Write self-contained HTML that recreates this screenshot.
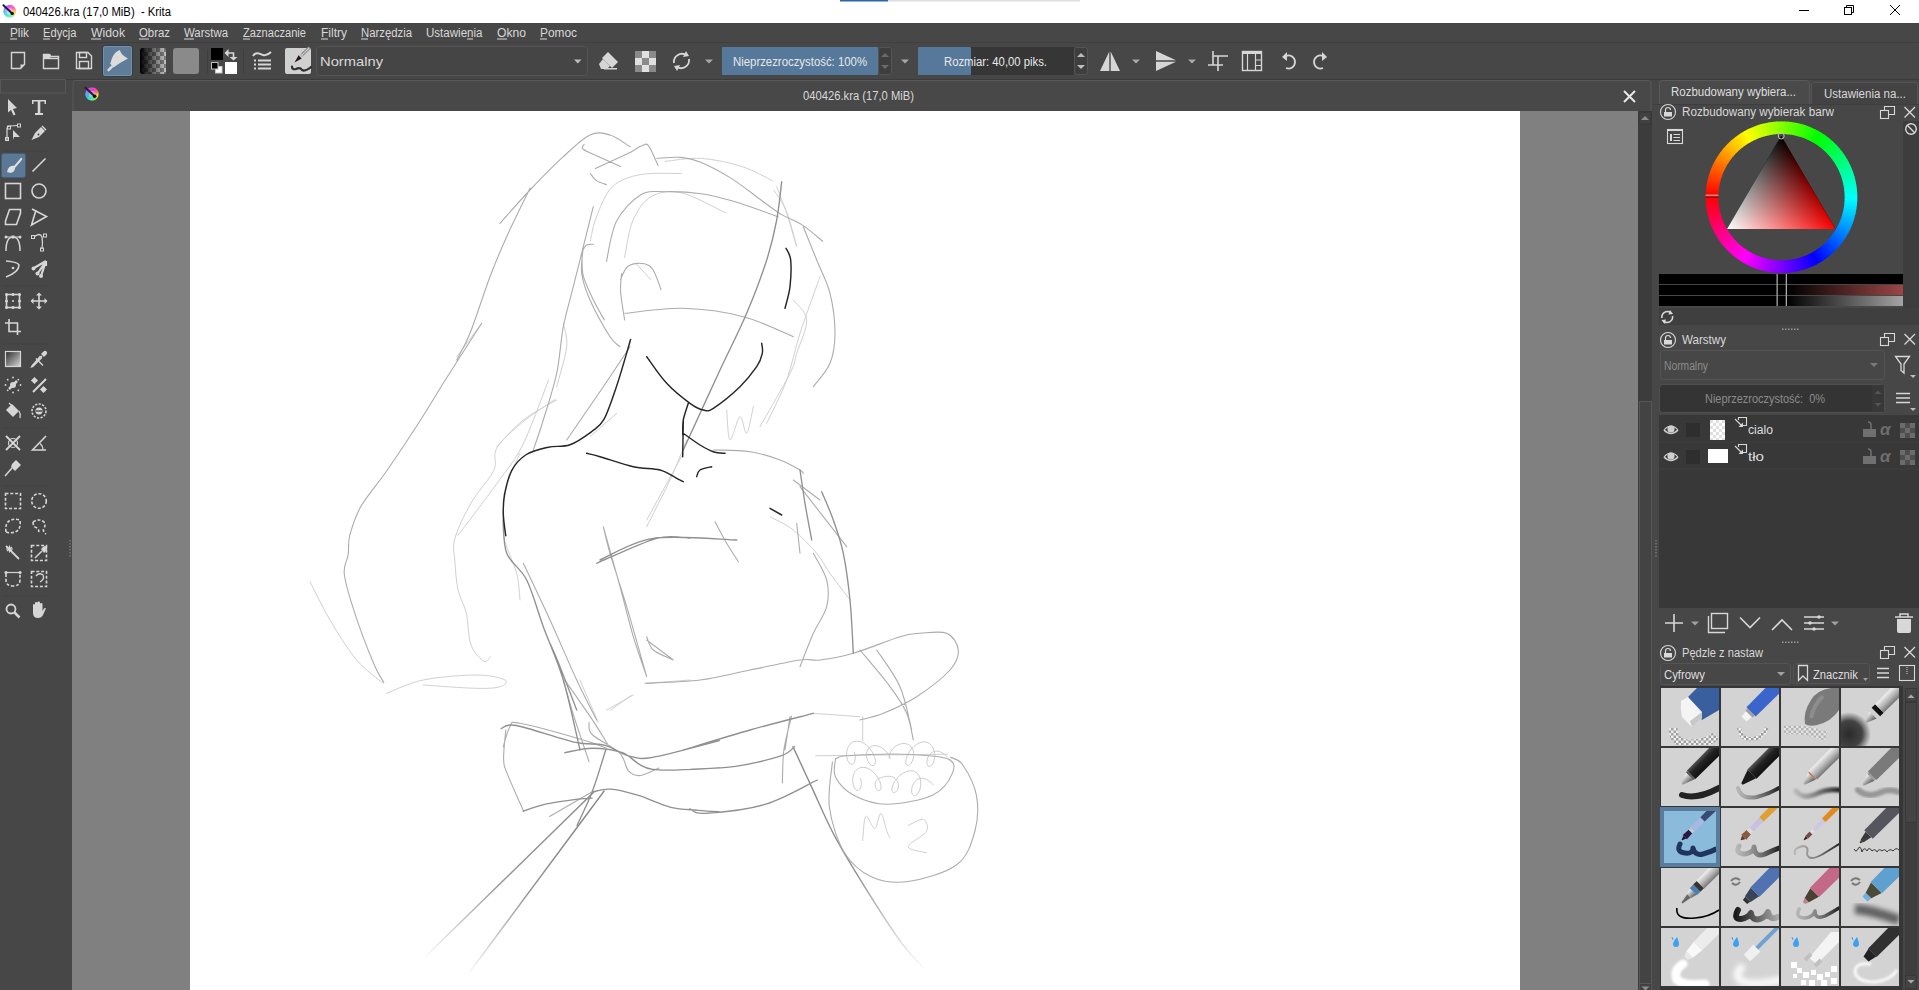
<!DOCTYPE html>
<html><head><meta charset="utf-8">
<style>
*{margin:0;padding:0}
html,body{width:1919px;height:990px;overflow:hidden;background:#474747}
svg{position:absolute;left:0;top:0;display:block}
text{font-family:"Liberation Sans",sans-serif;white-space:pre}
</style></head><body>
<svg width="1919" height="990" viewBox="0 0 1919 990">
<rect x="0" y="0" width="1919" height="23" fill="#ffffff" />
<rect x="840" y="0" width="48" height="1.5" fill="#2a66a8" />
<rect x="888" y="0" width="192" height="1.5" fill="#dedede" />
<defs><linearGradient id="klg" x1="0" y1="1" x2="1" y2="0"><stop offset="0" stop-color="#30e0e0"/><stop offset=".5" stop-color="#8aa0ff"/><stop offset="1" stop-color="#ff40e0"/></linearGradient></defs>
<g><path d="M9.7 11.2 L9.70 4.90 A6.3 6.3 0 0 1 11.01 5.04 Z" fill="#ff30f0"/><path d="M9.7 11.2 L10.79 5.00 A6.3 6.3 0 0 1 12.06 5.36 Z" fill="#ff39e0"/><path d="M9.7 11.2 L11.85 5.28 A6.3 6.3 0 0 1 13.04 5.86 Z" fill="#ff42d0"/><path d="M9.7 11.2 L12.85 5.74 A6.3 6.3 0 0 1 13.92 6.52 Z" fill="#ff4cc1"/><path d="M9.7 11.2 L13.75 6.37 A6.3 6.3 0 0 1 14.66 7.32 Z" fill="#ff55b1"/><path d="M9.7 11.2 L14.53 7.15 A6.3 6.3 0 0 1 15.26 8.24 Z" fill="#ff5ea2"/><path d="M9.7 11.2 L15.16 8.05 A6.3 6.3 0 0 1 15.69 9.25 Z" fill="#ff7590"/><path d="M9.7 11.2 L15.62 9.05 A6.3 6.3 0 0 1 15.94 10.32 Z" fill="#ff8e7d"/><path d="M9.7 11.2 L15.90 10.11 A6.3 6.3 0 0 1 16.00 11.42 Z" fill="#ffa76a"/><path d="M9.7 11.2 L16.00 11.20 A6.3 6.3 0 0 1 15.86 12.51 Z" fill="#ffc058"/><path d="M9.7 11.2 L15.90 12.29 A6.3 6.3 0 0 1 15.54 13.56 Z" fill="#ffd845"/><path d="M9.7 11.2 L15.62 13.35 A6.3 6.3 0 0 1 15.04 14.54 Z" fill="#ede248"/><path d="M9.7 11.2 L15.16 14.35 A6.3 6.3 0 0 1 14.38 15.42 Z" fill="#d4e555"/><path d="M9.7 11.2 L14.53 15.25 A6.3 6.3 0 0 1 13.58 16.16 Z" fill="#bbe861"/><path d="M9.7 11.2 L13.75 16.03 A6.3 6.3 0 0 1 12.66 16.76 Z" fill="#a3eb6e"/><path d="M9.7 11.2 L12.85 16.66 A6.3 6.3 0 0 1 11.65 17.19 Z" fill="#8aee7a"/><path d="M9.7 11.2 L11.85 17.12 A6.3 6.3 0 0 1 10.58 17.44 Z" fill="#77f08a"/><path d="M9.7 11.2 L10.79 17.40 A6.3 6.3 0 0 1 9.48 17.50 Z" fill="#67f09d"/><path d="M9.7 11.2 L9.70 17.50 A6.3 6.3 0 0 1 8.39 17.36 Z" fill="#58f0b0"/><path d="M9.7 11.2 L8.61 17.40 A6.3 6.3 0 0 1 7.34 17.04 Z" fill="#48f0c2"/><path d="M9.7 11.2 L7.55 17.12 A6.3 6.3 0 0 1 6.36 16.54 Z" fill="#38f0d5"/><path d="M9.7 11.2 L6.55 16.66 A6.3 6.3 0 0 1 5.48 15.88 Z" fill="#34eae2"/><path d="M9.7 11.2 L5.65 16.03 A6.3 6.3 0 0 1 4.74 15.08 Z" fill="#3ddee8"/><path d="M9.7 11.2 L4.87 15.25 A6.3 6.3 0 0 1 4.14 14.16 Z" fill="#46d1ee"/><path d="M9.7 11.2 L4.24 14.35 A6.3 6.3 0 0 1 3.71 13.15 Z" fill="#4fc5f4"/><path d="M9.7 11.2 L3.78 13.35 A6.3 6.3 0 0 1 3.46 12.08 Z" fill="#59b8fa"/><path d="M9.7 11.2 L3.50 12.29 A6.3 6.3 0 0 1 3.40 10.98 Z" fill="#63adff"/><path d="M9.7 11.2 L3.40 11.20 A6.3 6.3 0 0 1 3.54 9.89 Z" fill="#70a4ff"/><path d="M9.7 11.2 L3.50 10.11 A6.3 6.3 0 0 1 3.86 8.84 Z" fill="#7c9aff"/><path d="M9.7 11.2 L3.78 9.05 A6.3 6.3 0 0 1 4.36 7.86 Z" fill="#8891ff"/><path d="M9.7 11.2 L4.24 8.05 A6.3 6.3 0 0 1 5.02 6.98 Z" fill="#9587ff"/><path d="M9.7 11.2 L4.87 7.15 A6.3 6.3 0 0 1 5.82 6.24 Z" fill="#a27dfe"/><path d="M9.7 11.2 L5.65 6.37 A6.3 6.3 0 0 1 6.74 5.64 Z" fill="#b56efb"/><path d="M9.7 11.2 L6.55 5.74 A6.3 6.3 0 0 1 7.75 5.21 Z" fill="#c75ef8"/><path d="M9.7 11.2 L7.55 5.28 A6.3 6.3 0 0 1 8.82 4.96 Z" fill="#da4ff5"/><path d="M9.7 11.2 L8.61 5.00 A6.3 6.3 0 0 1 9.92 4.90 Z" fill="#ec3ff2"/></g>
<circle cx="9.7" cy="11.2" r="3.15" fill="#ffffff" opacity=".35"/>
<line x1="3.3999999999999995" y1="5.215" x2="10.959999999999999" y2="12.145" stroke="#2a1a3a" stroke-width="2.016" stroke-linecap="round"/>
<circle cx="12.219999999999999" cy="13.405" r="1.701" fill="#101010"/>
<text x="23" y="16" font-size="12" fill="#000000" textLength="148" lengthAdjust="spacingAndGlyphs" >040426.kra (17,0 MiB)  - Krita</text>
<g stroke="#000" stroke-width="1" fill="none"><line x1="1799" y1="10.5" x2="1809" y2="10.5"/><rect x="1844.5" y="7.5" width="7" height="7"/><path d="M1846.5 7.5 V5.5 H1853.5 V12.5 H1851.5"/><line x1="1890" y1="5" x2="1900" y2="15"/><line x1="1900" y1="5" x2="1890" y2="15"/></g>
<rect x="0" y="23" width="1919" height="20" fill="#474747" />
<text x="10" y="37" font-size="12" fill="#d8d8d8" textLength="19" lengthAdjust="spacingAndGlyphs" >Plik</text>
<rect x="10" y="38.5" width="7" height="1" fill="#d8d8d8" />
<text x="43" y="37" font-size="12" fill="#d8d8d8" textLength="33.5" lengthAdjust="spacingAndGlyphs" >Edycja</text>
<rect x="43" y="38.5" width="7" height="1" fill="#d8d8d8" />
<text x="91" y="37" font-size="12" fill="#d8d8d8" textLength="34" lengthAdjust="spacingAndGlyphs" >Widok</text>
<rect x="91" y="38.5" width="10" height="1" fill="#d8d8d8" />
<text x="139" y="37" font-size="12" fill="#d8d8d8" textLength="31" lengthAdjust="spacingAndGlyphs" >Obraz</text>
<rect x="139" y="38.5" width="10" height="1" fill="#d8d8d8" />
<text x="184" y="37" font-size="12" fill="#d8d8d8" textLength="44" lengthAdjust="spacingAndGlyphs" >Warstwa</text>
<rect x="184" y="38.5" width="10" height="1" fill="#d8d8d8" />
<text x="243" y="37" font-size="12" fill="#d8d8d8" textLength="63" lengthAdjust="spacingAndGlyphs" >Zaznaczanie</text>
<rect x="243" y="38.5" width="7" height="1" fill="#d8d8d8" />
<text x="321" y="37" font-size="12" fill="#d8d8d8" textLength="26" lengthAdjust="spacingAndGlyphs" >Filtry</text>
<rect x="321" y="38.5" width="7" height="1" fill="#d8d8d8" />
<text x="361" y="37" font-size="12" fill="#d8d8d8" textLength="51" lengthAdjust="spacingAndGlyphs" >Narzędzia</text>
<rect x="361" y="38.5" width="7" height="1" fill="#d8d8d8" />
<text x="426" y="37" font-size="12" fill="#d8d8d8" textLength="56.5" lengthAdjust="spacingAndGlyphs" >Ustawienia</text>
<rect x="467" y="38.5" width="6" height="1" fill="#d8d8d8" />
<text x="497" y="37" font-size="12" fill="#d8d8d8" textLength="29" lengthAdjust="spacingAndGlyphs" >Okno</text>
<rect x="497" y="38.5" width="10" height="1" fill="#d8d8d8" />
<text x="540" y="37" font-size="12" fill="#d8d8d8" textLength="37" lengthAdjust="spacingAndGlyphs" >Pomoc</text>
<rect x="540" y="38.5" width="7" height="1" fill="#d8d8d8" />
<rect x="0" y="43" width="1919" height="37" fill="#474747" />
<rect x="0" y="42" width="1919" height="1" fill="#3f3f3f" />
<rect x="0" y="79" width="1919" height="1" fill="#3b3b3b" />
<path d="M11.5 52.5 H24.5 V64.5 L20.5 68.5 H11.5 Z" fill="none" stroke="#d6d6d6" stroke-width="1.4"/><path d="M24.5 64.5 H20.5 V68.5 Z" fill="#d6d6d6"/>
<path d="M43.5 54.5 H49 L51 56.5 H58.5 V68.5 H43.5 Z" fill="none" stroke="#d6d6d6" stroke-width="1.4"/><rect x="43.5" y="54" width="7" height="4" fill="#d6d6d6"/><line x1="43.5" y1="58.5" x2="58.5" y2="58.5" stroke="#d6d6d6" stroke-width="1.4"/>
<path d="M76.5 52.5 H88 L91.5 56 V68.5 H76.5 Z" fill="none" stroke="#d6d6d6" stroke-width="1.4"/><rect x="79.5" y="52.5" width="7" height="5" fill="none" stroke="#d6d6d6" stroke-width="1.4"/><rect x="79.5" y="61.5" width="9" height="7" fill="none" stroke="#d6d6d6" stroke-width="1.4"/>
<rect x="102.5" y="45.5" width="30" height="31" fill="#5f7c98" rx="2.5" stroke="#2e3e4e" stroke-width="1"/>
<rect x="103.5" y="46.5" width="28" height="29" fill="none" rx="2" stroke="#8aa2b6" stroke-width="1" opacity=".55"/>
<path d="M119.8 50 Q121.5 55.5 128 58.5 Q120 62.5 113.5 67.6 L110.2 63.8 Q111.5 59 113 56 Q115.5 51.5 119.8 50 Z" fill="#dcdcdc"/><path d="M111.8 66.8 L108.5 70.2" stroke="#d8dde2" stroke-width="2.4" stroke-linecap="round"/>
<defs><linearGradient id="g1" x1="0" x2="1"><stop offset="0" stop-color="#000"/><stop offset="1" stop-color="#000" stop-opacity="0"/></linearGradient><pattern id="chk" x="140" y="48" width="8" height="8" patternUnits="userSpaceOnUse"><rect width="8" height="8" fill="#c4c4c4"/><rect width="4" height="4" fill="#7c7c7c"/><rect x="4" y="4" width="4" height="4" fill="#7c7c7c"/></pattern></defs>
<rect x="140" y="48" width="26" height="26" fill="url(#chk)" rx="2"/>
<rect x="140" y="48" width="26" height="26" fill="url(#g1)" rx="2"/>
<rect x="173" y="48" width="26" height="26" fill="#8a8a8a" rx="3"/>
<rect x="211" y="48" width="12" height="12" fill="#000000" />
<rect x="225" y="62" width="12" height="12" fill="#ffffff" />
<rect x="215.5" y="66.5" width="6.5" height="6.5" fill="#fff" stroke="#c8c8c8" stroke-width="1"/>
<rect x="211.5" y="62.5" width="6.5" height="6.5" fill="#000" stroke="#c0c0c0" stroke-width="1"/>
<path d="M227.5 53 H233.5 V57.5" stroke="#d6d6d6" stroke-width="1.6" fill="none"/><path d="M224.5 53 L228.5 49 V57 Z M229.5 57 H237.5 L233.5 60.5 Z" fill="#d6d6d6"/>
<rect x="207" y="49" width="1" height="24" fill="#3e3e3e" />
<rect x="243" y="49" width="1" height="24" fill="#3e3e3e" />
<path d="M253 56 C256 51 260 54 263 55 C266 56 269 54 271 52" stroke="#d6d6d6" stroke-width="2" fill="none"/>
<rect x="254" y="59.5" width="2" height="2" fill="#d6d6d6" />
<rect x="258" y="59.5" width="13" height="2" fill="#d6d6d6" />
<rect x="254" y="63.5" width="2" height="2" fill="#d6d6d6" />
<rect x="258" y="63.5" width="13" height="2" fill="#d6d6d6" />
<rect x="254" y="67.5" width="2" height="2" fill="#d6d6d6" />
<rect x="258" y="67.5" width="13" height="2" fill="#d6d6d6" />
<rect x="285" y="48" width="26" height="26" fill="#d0d0d0" rx="2"/>
<g transform="translate(294.5 62.5) rotate(-45)"><path d="M0 0 L8 -2.2 L8 2.2 Z" fill="#2a1414"/><rect x="8" y="-1.8" width="3" height="3.6" fill="#bbb"/><rect x="11" y="-1.6" width="10" height="3.2" fill="#8a8a8a"/><rect x="11" y="-0.4" width="10" height="0.8" fill="#e0e0e0"/></g>
<path d="M292 66.5 Q292 70 296 69 Q300 67 302 70 Q305 72 311 67" stroke="#2e2e2e" stroke-width="2.2" fill="none" stroke-linecap="round"/>
<rect x="316.5" y="46.5" width="271" height="29" fill="#454545" rx="3" stroke="#555555" stroke-width="1"/>
<text x="320" y="66" font-size="13" fill="#d8d8d8" textLength="63" lengthAdjust="spacingAndGlyphs" >Normalny</text>
<path d="M574 59.5 H581.5 L577.75 63.5 Z" fill="#bcbcbc"/>
<path d="M608 52 L618 62 L612 68 L602 58 Z" fill="#d6d6d6"/><path d="M599 64 L603 59 L610 66 L607 69 H601 Z" fill="#d6d6d6"/><rect x="604" y="68" width="13" height="1.5" fill="#d6d6d6"/>
<rect x="635" y="51" width="7" height="7" fill="#8a8a8a" />
<rect x="635" y="58" width="7" height="7" fill="#e0e0e0" />
<rect x="635" y="65" width="7" height="7" fill="#8a8a8a" />
<rect x="642" y="51" width="7" height="7" fill="#e0e0e0" />
<rect x="642" y="58" width="7" height="7" fill="#8a8a8a" />
<rect x="642" y="65" width="7" height="7" fill="#e0e0e0" />
<rect x="649" y="51" width="7" height="7" fill="#8a8a8a" />
<rect x="649" y="58" width="7" height="7" fill="#e0e0e0" />
<rect x="649" y="65" width="7" height="7" fill="#8a8a8a" />
<path d="M674 63 A8 8 0 0 1 686 55 M689 59 A8 8 0 0 1 677 67" stroke="#d6d6d6" stroke-width="1.8" fill="none"/><path d="M686 51 L689 56 L683 57 Z M677 71 L674 66 L680 65 Z" fill="#d6d6d6"/>
<path d="M705 59.5 H713 L709 63.5 Z" fill="#a8a8a8"/>
<rect x="722" y="47" width="156" height="28" fill="#56789a" rx="1"/>
<rect x="878.5" y="47.5" width="13" height="27" fill="#3e3e3e" rx="2" stroke="#555555" stroke-width="1"/>
<path d="M881 57 L885 53 L889 57 Z M881 65 L885 69 L889 65 Z" fill="#6a6a6a"/>
<text x="733" y="66" font-size="12" fill="#e8e8e8" textLength="134" lengthAdjust="spacingAndGlyphs" >Nieprzezroczystość: 100%</text>
<path d="M901 59.5 H909 L905 63.5 Z" fill="#a8a8a8"/>
<rect x="918" y="47" width="156" height="28" fill="#363636" rx="1"/>
<rect x="918" y="47" width="53" height="28" fill="#56789a" rx="1"/>
<rect x="1074.5" y="47.5" width="13" height="27" fill="#3e3e3e" rx="2" stroke="#555555" stroke-width="1"/>
<path d="M1077 57 L1081 53 L1085 57 Z M1077 65 L1081 69 L1085 65 Z" fill="#bdbdbd"/>
<text x="944" y="66" font-size="12" fill="#e8e8e8" textLength="103" lengthAdjust="spacingAndGlyphs" >Rozmiar: 40,00 piks.</text>
<path d="M1109.3 51.5 V71 H1100 Z M1110.7 51.5 V71 H1120 Z" fill="#d6d6d6"/>
<path d="M1132 59.5 H1140 L1136 63.5 Z" fill="#a8a8a8"/>
<path d="M1156 51 L1176 60.3 H1156 Z M1156 61.7 H1176 L1156 71 Z" fill="#d6d6d6"/>
<path d="M1188 59.5 H1196 L1192 63.5 Z" fill="#a8a8a8"/>
<path d="M1213 51 V65 H1208 M1213 65 H1223 M1218 71 V56 H1228 M1218 56 H1213" stroke="#d6d6d6" stroke-width="1.6" fill="none"/>
<rect x="1242.5" y="51.5" width="19" height="19" fill="none" stroke="#d6d6d6" stroke-width="1.4"/><rect x="1242" y="51" width="20" height="3" fill="#d6d6d6"/><path d="M1247.5 54 V71 M1255.5 54 V71 M1255.5 60 H1262 M1255.5 65.5 H1262" stroke="#d6d6d6" stroke-width="1.2"/>
<path d="M1285 56 A6.5 6.5 0 1 1 1285 68" stroke="#d6d6d6" stroke-width="1.8" fill="none" transform="translate(1 0)"/><path d="M1282 57 L1287 52 V61 Z" fill="#d6d6d6"/>
<path d="M1324 56 A6.5 6.5 0 1 0 1324 68" stroke="#d6d6d6" stroke-width="1.8" fill="none" transform="translate(-1 0)"/><path d="M1327 57 L1322 52 V61 Z" fill="#d6d6d6"/>
<rect x="0" y="80" width="66" height="910" fill="#474747" />
<rect x="0.5" y="79.5" width="65" height="13.5" fill="#474747" stroke="#575757" stroke-width="1"/>
<rect x="66" y="80" width="7" height="910" fill="#474747" />
<rect x="69.5" y="540" width="1" height="1.5" fill="#8a8a8a" />
<rect x="69.5" y="543" width="1" height="1.5" fill="#8a8a8a" />
<rect x="69.5" y="546" width="1" height="1.5" fill="#8a8a8a" />
<rect x="69.5" y="549" width="1" height="1.5" fill="#8a8a8a" />
<rect x="69.5" y="552" width="1" height="1.5" fill="#8a8a8a" />
<rect x="69.5" y="555" width="1" height="1.5" fill="#8a8a8a" />
<rect x="1.5" y="153.5" width="24" height="24" fill="#5b7896" rx="2" stroke="#465f78" stroke-width="1"/>
<rect x="4" y="150.5" width="44" height="1" fill="#424242" />
<rect x="4" y="285.5" width="44" height="1" fill="#424242" />
<rect x="4" y="343.5" width="44" height="1" fill="#424242" />
<rect x="4" y="427.5" width="44" height="1" fill="#424242" />
<rect x="4" y="485.5" width="44" height="1" fill="#424242" />
<rect x="4" y="595.5" width="44" height="1" fill="#424242" />
<path d="M8 99 L17 108 L13 109 L15.5 114.5 L13.5 115.5 L11 110 L8 112.5 Z" fill="#d6d6d6"/>
<path d="M32 100 H46 V104 H44.5 V101.5 H40.3 V113 H43 V115 H35 V113 H37.7 V101.5 H33.5 V104 H32 Z" fill="#d6d6d6"/>
<path d="M7 140 V128 Q8 126 10 126 L17 125.5" stroke="#d6d6d6" stroke-width="1.2" fill="none"/><rect x="5.5" y="137.5" width="3" height="3" fill="none" stroke="#d6d6d6"/><rect x="7.5" y="126" width="3" height="3" fill="none" stroke="#d6d6d6"/><rect x="17.5" y="124" width="3" height="3" fill="none" stroke="#d6d6d6"/><path d="M13 130 L20 137 L14 137 L13 140 Z" fill="#d6d6d6"/>
<path d="M31.5 140 L35 133 L41 127 L45 131 L39 137 Z" fill="#d6d6d6"/><path d="M42 126 L46 130" stroke="#d6d6d6" stroke-width="1.5"/><circle cx="38.5" cy="134.5" r="1" fill="#474747"/>
<path d="M7 172 C8 167 11 165 14 166 L20 159 Q21 157 22 158 Q23 159 21 161 L15 168 C15 172 11 174 7 172 Z" fill="#e0e0e0"/>
<line x1="32.5" y1="171.5" x2="45.5" y2="158.5" stroke="#d6d6d6" stroke-width="1.6"/>
<rect x="5.5" y="183.5" width="15" height="15" fill="none" stroke="#d6d6d6" stroke-width="1.6"/><circle cx="39" cy="191" r="7" fill="none" stroke="#d6d6d6" stroke-width="1.6"/>
<path d="M5.5 221 L9.5 209.5 H20.5 V213 L16.5 224.5 H5.5 Z" fill="none" stroke="#d6d6d6" stroke-width="1.6"/>
<path d="M32 209 L46.5 216.5 L31.5 225 L36 210" fill="none" stroke="#d6d6d6" stroke-width="1.6"/>
<path d="M6 251 Q6 237 13 237 Q20 237 20 251" fill="none" stroke="#d6d6d6" stroke-width="1.5"/><path d="M5 237 H21" stroke="#d6d6d6" stroke-width="1"/><rect x="11.5" y="235.5" width="3" height="3" fill="#d6d6d6"/><circle cx="6" cy="237" r="1.5" fill="#d6d6d6"/><circle cx="20" cy="237" r="1.5" fill="#d6d6d6"/>
<path d="M34 237 Q40 232 42 237 Q43 242 42 249" fill="none" stroke="#d6d6d6" stroke-width="1.3"/><rect x="31.5" y="235.5" width="3" height="3" fill="none" stroke="#d6d6d6"/><rect x="43.5" y="234" width="3" height="3" fill="none" stroke="#d6d6d6"/><rect x="40.5" y="248" width="3" height="3" fill="none" stroke="#d6d6d6"/>
<path d="M6 261 Q18 262 19 265 Q19 272 6 277" fill="none" stroke="#d6d6d6" stroke-width="1.6"/><circle cx="13" cy="268" r="1.3" fill="#d6d6d6"/>
<path d="M46 261 L34 268 M46 261 L38 273 M46 261 L41 276 M46 261 V266" stroke="#d6d6d6" stroke-width="2.2" fill="none"/><circle cx="33.5" cy="268.5" r="2" fill="#d6d6d6"/><circle cx="37.5" cy="273.5" r="2" fill="#d6d6d6"/><circle cx="41" cy="276" r="2" fill="#d6d6d6"/>
<rect x="6.5" y="294.5" width="13" height="13" fill="none" stroke="#d6d6d6" stroke-width="1.6"/><circle cx="13" cy="301" r="1" fill="#d6d6d6"/>
<circle cx="6.5" cy="294.5" r="1.5" fill="#d6d6d6"/>
<circle cx="13" cy="294.5" r="1.5" fill="#d6d6d6"/>
<circle cx="19.5" cy="294.5" r="1.5" fill="#d6d6d6"/>
<circle cx="6.5" cy="301" r="1.5" fill="#d6d6d6"/>
<circle cx="19.5" cy="301" r="1.5" fill="#d6d6d6"/>
<circle cx="6.5" cy="307.5" r="1.5" fill="#d6d6d6"/>
<circle cx="13" cy="307.5" r="1.5" fill="#d6d6d6"/>
<circle cx="19.5" cy="307.5" r="1.5" fill="#d6d6d6"/>
<path d="M39 294 V308 M32 301 H46" stroke="#d6d6d6" stroke-width="1.6"/><path d="M39 292.5 L36 295.5 H42 Z M39 309.5 L36 306.5 H42 Z M30.5 301 L33.5 298 V304 Z M47.5 301 L44.5 298 V304 Z" fill="#d6d6d6"/>
<path d="M9 319 V331.5 H21 M5 323 H17.5 V335" stroke="#d6d6d6" stroke-width="1.6" fill="none"/>
<defs><linearGradient id="gtb" x1="0" y1="0" x2="1" y2="1"><stop offset="0" stop-color="#2a2a2a"/><stop offset="1" stop-color="#d8d8d8"/></linearGradient></defs>
<rect x="5.5" y="351.5" width="15" height="15" fill="url(#gtb)" stroke="#d6d6d6" stroke-width="1.2"/>
<path d="M32 366 L42 356 M36 358.5 L43 365.5" stroke="#d6d6d6" stroke-width="1.4"/><path d="M32 366 L31.5 367 L33 366.5 L41.5 358 L40 356.5 Z" fill="none" stroke="#d6d6d6" stroke-width="1.2"/><path d="M41 354 L43 352 Q45 350 46.5 351.5 Q48 353 46 355 L44 357 Z" fill="#d6d6d6"/>
<path d="M9 389 L17 381" stroke="#d6d6d6" stroke-width="2.5"/><circle cx="13" cy="385" r="3" fill="#d6d6d6"/>
<circle cx="20.5" cy="385.0" r="0.9" fill="#d6d6d6"/>
<circle cx="18.3" cy="390.3" r="0.9" fill="#d6d6d6"/>
<circle cx="13.0" cy="392.5" r="0.9" fill="#d6d6d6"/>
<circle cx="7.7" cy="390.3" r="0.9" fill="#d6d6d6"/>
<circle cx="5.5" cy="385.0" r="0.9" fill="#d6d6d6"/>
<circle cx="7.7" cy="379.7" r="0.9" fill="#d6d6d6"/>
<circle cx="13.0" cy="377.5" r="0.9" fill="#d6d6d6"/>
<circle cx="18.3" cy="379.7" r="0.9" fill="#d6d6d6"/>
<path d="M33 392 L46 379" stroke="#d6d6d6" stroke-width="2"/><rect x="32" y="378" width="5" height="5" fill="#d6d6d6" transform="rotate(45 34.5 380.5)"/><rect x="41" y="387" width="5" height="5" fill="#d6d6d6" transform="rotate(45 43.5 389.5)"/>
<path d="M6 410 L12 404 L19 411 L13 417 Z" fill="#d6d6d6"/><path d="M9 403 L12 406" stroke="#d6d6d6" stroke-width="1.3"/><path d="M19 411 Q21 414 20 418" stroke="#d6d6d6" stroke-width="1.3" fill="none"/>
<circle cx="39" cy="411" r="7" fill="none" stroke="#d6d6d6" stroke-width="1.6" stroke-dasharray="2.2 1.4"/><circle cx="39" cy="411" r="3.5" fill="#d6d6d6"/><rect x="36" y="410.3" width="6" height="1.4" fill="#474747"/>
<path d="M6 436 L20 450 M20 436 L6 450" stroke="#d6d6d6" stroke-width="1.8"/><circle cx="13" cy="443" r="4.5" fill="none" stroke="#d6d6d6" stroke-width="1.2"/>
<path d="M46 436 L32.5 450 H46" stroke="#d6d6d6" stroke-width="1.6" fill="none"/><path d="M40 443.5 Q43 446 43 450" stroke="#d6d6d6" stroke-width="1.2" fill="none"/>
<path d="M12 464 L16 460 L21 465 L17 469 L15 471 L11 467 Z" fill="#d6d6d6"/><path d="M12 468 L5 476" stroke="#d6d6d6" stroke-width="1.5"/>
<rect x="5.5" y="493.5" width="15" height="15" fill="none" stroke="#d6d6d6" stroke-width="1.6" stroke-dasharray="3 1.8"/><circle cx="39" cy="501" r="7.3" fill="none" stroke="#d6d6d6" stroke-width="1.6" stroke-dasharray="3 1.8"/>
<path d="M6 532 Q5 524 9 521 Q14 518 20 520 Q21 528 17 531 Q12 534 6 532 Z" fill="none" stroke="#d6d6d6" stroke-width="1.6" stroke-dasharray="3 1.8"/>
<path d="M33 522 Q39 518 44 522 Q46 525 44 528 Q42 531 46 534 M33 522 Q33 527 37 528 Q40 530 38 534" fill="none" stroke="#d6d6d6" stroke-width="1.6" stroke-dasharray="3 1.8"/>
<path d="M6 546 L19 559" stroke="#d6d6d6" stroke-width="1.8"/><path d="M6 549 H13 M9.5 545.5 V552.5 M7 547 L12 551 M12 547 L7 551" stroke="#d6d6d6" stroke-width="1.2"/>
<rect x="31.5" y="545.5" width="15" height="15" fill="none" stroke="#d6d6d6" stroke-width="1.6" stroke-dasharray="3 1.8"/><path d="M35 558 L42 551" stroke="#d6d6d6" stroke-width="1.4"/><path d="M41 549 L43 547 Q45 545 47 547 Q48 549 46 551 L44 553 Z" fill="#d6d6d6"/>
<path d="M6 574 V580 Q6 586 13 586 Q20 586 20 580 V574" fill="none" stroke="#d6d6d6" stroke-width="1.6" stroke-dasharray="3 1.8"/><path d="M6 572.5 H20" stroke="#d6d6d6" stroke-width="1.2"/><circle cx="6" cy="572.5" r="1.6" fill="#d6d6d6"/><circle cx="20" cy="572.5" r="1.6" fill="#d6d6d6"/>
<rect x="31.5" y="571.5" width="15" height="15" fill="none" stroke="#d6d6d6" stroke-width="1.6" stroke-dasharray="3 1.8"/><path d="M36 576 Q39 572 43 575 Q45 579 40 582" stroke="#d6d6d6" stroke-width="1.3" fill="none"/>
<circle cx="11" cy="609" r="4.5" fill="none" stroke="#d6d6d6" stroke-width="1.8"/><path d="M14 612 L19.5 617.5" stroke="#d6d6d6" stroke-width="2.5"/>
<path d="M33 611 V605 Q33 604 34 604 Q35 604 35 605 V610 V603 Q35 602 36.3 602 Q37.5 602 37.5 603 V610 V602.5 Q37.5 601.5 38.8 601.5 Q40 601.5 40 602.5 V610 V604 Q40 603 41.2 603 Q42.5 603 42.5 604 V611 L44 608.5 Q45 607.5 46 608.3 L43 615 Q41.5 618 38 618 Q33 618 33 613 Z" fill="#d6d6d6"/>
<rect x="72" y="80" width="1580" height="31" fill="#474747" />
<path d="M73 111 V83.5 Q73 80.5 76 80.5 H1648 Q1651 80.5 1651 83.5 V111" fill="#484848" stroke="#595959" stroke-width="1"/>
<g><path d="M92 94 L92.00 87.40 A6.6 6.6 0 0 1 93.37 87.54 Z" fill="#ff30f0"/><path d="M92 94 L93.15 87.50 A6.6 6.6 0 0 1 94.47 87.88 Z" fill="#ff39e0"/><path d="M92 94 L94.26 87.80 A6.6 6.6 0 0 1 95.50 88.40 Z" fill="#ff42d0"/><path d="M92 94 L95.30 88.28 A6.6 6.6 0 0 1 96.42 89.10 Z" fill="#ff4cc1"/><path d="M92 94 L96.24 88.94 A6.6 6.6 0 0 1 97.20 89.94 Z" fill="#ff55b1"/><path d="M92 94 L97.06 89.76 A6.6 6.6 0 0 1 97.83 90.90 Z" fill="#ff5ea2"/><path d="M92 94 L97.72 90.70 A6.6 6.6 0 0 1 98.28 91.96 Z" fill="#ff7590"/><path d="M92 94 L98.20 91.74 A6.6 6.6 0 0 1 98.54 93.08 Z" fill="#ff8e7d"/><path d="M92 94 L98.50 92.85 A6.6 6.6 0 0 1 98.60 94.23 Z" fill="#ffa76a"/><path d="M92 94 L98.60 94.00 A6.6 6.6 0 0 1 98.46 95.37 Z" fill="#ffc058"/><path d="M92 94 L98.50 95.15 A6.6 6.6 0 0 1 98.12 96.47 Z" fill="#ffd845"/><path d="M92 94 L98.20 96.26 A6.6 6.6 0 0 1 97.60 97.50 Z" fill="#ede248"/><path d="M92 94 L97.72 97.30 A6.6 6.6 0 0 1 96.90 98.42 Z" fill="#d4e555"/><path d="M92 94 L97.06 98.24 A6.6 6.6 0 0 1 96.06 99.20 Z" fill="#bbe861"/><path d="M92 94 L96.24 99.06 A6.6 6.6 0 0 1 95.10 99.83 Z" fill="#a3eb6e"/><path d="M92 94 L95.30 99.72 A6.6 6.6 0 0 1 94.04 100.28 Z" fill="#8aee7a"/><path d="M92 94 L94.26 100.20 A6.6 6.6 0 0 1 92.92 100.54 Z" fill="#77f08a"/><path d="M92 94 L93.15 100.50 A6.6 6.6 0 0 1 91.77 100.60 Z" fill="#67f09d"/><path d="M92 94 L92.00 100.60 A6.6 6.6 0 0 1 90.63 100.46 Z" fill="#58f0b0"/><path d="M92 94 L90.85 100.50 A6.6 6.6 0 0 1 89.53 100.12 Z" fill="#48f0c2"/><path d="M92 94 L89.74 100.20 A6.6 6.6 0 0 1 88.50 99.60 Z" fill="#38f0d5"/><path d="M92 94 L88.70 99.72 A6.6 6.6 0 0 1 87.58 98.90 Z" fill="#34eae2"/><path d="M92 94 L87.76 99.06 A6.6 6.6 0 0 1 86.80 98.06 Z" fill="#3ddee8"/><path d="M92 94 L86.94 98.24 A6.6 6.6 0 0 1 86.17 97.10 Z" fill="#46d1ee"/><path d="M92 94 L86.28 97.30 A6.6 6.6 0 0 1 85.72 96.04 Z" fill="#4fc5f4"/><path d="M92 94 L85.80 96.26 A6.6 6.6 0 0 1 85.46 94.92 Z" fill="#59b8fa"/><path d="M92 94 L85.50 95.15 A6.6 6.6 0 0 1 85.40 93.77 Z" fill="#63adff"/><path d="M92 94 L85.40 94.00 A6.6 6.6 0 0 1 85.54 92.63 Z" fill="#70a4ff"/><path d="M92 94 L85.50 92.85 A6.6 6.6 0 0 1 85.88 91.53 Z" fill="#7c9aff"/><path d="M92 94 L85.80 91.74 A6.6 6.6 0 0 1 86.40 90.50 Z" fill="#8891ff"/><path d="M92 94 L86.28 90.70 A6.6 6.6 0 0 1 87.10 89.58 Z" fill="#9587ff"/><path d="M92 94 L86.94 89.76 A6.6 6.6 0 0 1 87.94 88.80 Z" fill="#a27dfe"/><path d="M92 94 L87.76 88.94 A6.6 6.6 0 0 1 88.90 88.17 Z" fill="#b56efb"/><path d="M92 94 L88.70 88.28 A6.6 6.6 0 0 1 89.96 87.72 Z" fill="#c75ef8"/><path d="M92 94 L89.74 87.80 A6.6 6.6 0 0 1 91.08 87.46 Z" fill="#da4ff5"/><path d="M92 94 L90.85 87.50 A6.6 6.6 0 0 1 92.23 87.40 Z" fill="#ec3ff2"/></g>
<circle cx="92" cy="94" r="3.3" fill="#ffffff" opacity=".35"/>
<line x1="85.4" y1="87.73" x2="93.32" y2="94.99" stroke="#2a1a3a" stroke-width="2.112" stroke-linecap="round"/>
<circle cx="94.64" cy="96.31" r="1.782" fill="#101010"/>
<text x="803" y="100" font-size="12" fill="#d8d8d8" textLength="111" lengthAdjust="spacingAndGlyphs" >040426.kra (17,0 MiB)</text>
<path d="M1624 91 L1635 102 M1635 91 L1624 102" stroke="#e8e8e8" stroke-width="2"/>
<rect x="72" y="111" width="1566" height="879" fill="#808080" />
<rect x="190" y="111" width="1330" height="879" fill="#ffffff" />
<rect x="1638" y="111" width="14" height="879" fill="#3c3c3c" />
<rect x="1639" y="112" width="12" height="12" fill="#414141" stroke="#363636" stroke-width="1"/>
<path d="M1641 120 L1645 116 L1649 120 Z" fill="#8c8c8c"/>
<rect x="1639.5" y="401.5" width="12" height="600" fill="#434343" stroke="#575757" stroke-width="1"/>
<rect x="1639.5" y="983.5" width="12" height="10" fill="#414141" stroke="#575757" stroke-width="1"/>
<path d="M1641.5 986.5 L1645.5 990.5 L1649.5 986.5 Z" fill="#8c8c8c"/>
<rect x="1652" y="80" width="267" height="910" fill="#474747" />
<path d="M1659.5 104 V83.5 Q1659.5 80.5 1662.5 80.5 H1806.5 Q1809.5 80.5 1809.5 83.5 V104" fill="#4a4a4a" stroke="#5a5a5a" stroke-width="1"/>
<path d="M1811.5 104 V85 Q1811.5 82.5 1814 82.5 H1914 Q1917.5 82.5 1917.5 85 V104" fill="#434343" stroke="#555555" stroke-width="1"/>
<rect x="1652" y="104" width="267" height="1" fill="#3e3e3e" />
<text x="1671" y="96.4" font-size="12" fill="#dedede" textLength="125" lengthAdjust="spacingAndGlyphs" >Rozbudowany wybiera...</text>
<text x="1824" y="98" font-size="12" fill="#d8d8d8" textLength="82" lengthAdjust="spacingAndGlyphs" >Ustawienia na...</text>
<circle cx="1668" cy="112" r="7.5" fill="none" stroke="#d8d8d8" stroke-width="1.1"/><path d="M1665.5 112 V110 Q1665.5 107.5 1668 107.5 Q1670.5 107.5 1670.5 110" fill="none" stroke="#d8d8d8" stroke-width="1.2"/><rect x="1664" y="112" width="8" height="4.5" fill="#d8d8d8"/>
<text x="1682" y="116.2" font-size="12" fill="#d8d8d8" textLength="152" lengthAdjust="spacingAndGlyphs" >Rozbudowany wybierak barw</text>
<rect x="1880.5" y="110.5" width="8" height="8" fill="none" stroke="#d8d8d8" stroke-width="1.1"/><path d="M1884.5 110.5 V106.5 H1894.5 V114.5 H1888.5" fill="none" stroke="#d8d8d8" stroke-width="1.1"/>
<path d="M1904.5 107 L1915 117.5 M1915 107 L1904.5 117.5" stroke="#d8d8d8" stroke-width="1.3"/>
<rect x="1903" y="121" width="16" height="204" fill="#3d3d3d" />
<circle cx="1911" cy="129" r="5.3" fill="none" stroke="#d8d8d8" stroke-width="1.4"/><path d="M1907.3 125.3 L1914.7 132.7" stroke="#d8d8d8" stroke-width="1.4"/>
<rect x="1667.5" y="129.5" width="15" height="14" fill="none" stroke="#d8d8d8" stroke-width="1.1"/><rect x="1667" y="129" width="16" height="2" fill="#d8d8d8"/><rect x="1670" y="134" width="2" height="7" fill="#d8d8d8"/><path d="M1673.5 134.5 H1680 M1673.5 137.5 H1680 M1673.5 140.5 H1680" stroke="#d8d8d8" stroke-width="1"/>
<g><path d="M1857.30 197.20 L1857.22 200.64 L1844.63 200.07 L1844.70 197.20Z" fill="#00ffff"/><path d="M1857.25 199.85 L1857.06 203.28 L1844.50 202.27 L1844.66 199.41Z" fill="#00f6ff"/><path d="M1857.12 202.49 L1856.80 205.91 L1844.28 204.46 L1844.55 201.61Z" fill="#00edff"/><path d="M1856.88 205.12 L1856.45 208.53 L1843.99 206.65 L1844.35 203.81Z" fill="#00e5ff"/><path d="M1856.56 207.75 L1856.01 211.14 L1843.62 208.83 L1844.08 206.00Z" fill="#00ddff"/><path d="M1856.15 210.36 L1855.47 213.74 L1843.18 210.99 L1843.74 208.17Z" fill="#00d4ff"/><path d="M1855.64 212.96 L1854.85 216.31 L1842.66 213.13 L1843.32 210.34Z" fill="#00cbff"/><path d="M1855.05 215.54 L1854.14 218.86 L1842.07 215.26 L1842.82 212.49Z" fill="#00c3ff"/><path d="M1854.36 218.09 L1853.34 221.38 L1841.40 217.36 L1842.25 214.62Z" fill="#00bbff"/><path d="M1853.59 220.62 L1852.45 223.87 L1840.66 219.44 L1841.61 216.73Z" fill="#00b2ff"/><path d="M1852.73 223.13 L1851.48 226.33 L1839.85 221.49 L1840.89 218.82Z" fill="#00a9ff"/><path d="M1851.78 225.60 L1850.42 228.75 L1838.96 223.51 L1840.10 220.88Z" fill="#00a1ff"/><path d="M1850.75 228.03 L1849.28 231.14 L1838.01 225.50 L1839.24 222.91Z" fill="#0099ff"/><path d="M1849.63 230.43 L1848.05 233.48 L1836.99 227.45 L1838.30 224.91Z" fill="#0090ff"/><path d="M1848.43 232.79 L1846.74 235.79 L1835.90 229.37 L1837.30 226.87Z" fill="#0087ff"/><path d="M1847.14 235.10 L1845.36 238.04 L1834.74 231.25 L1836.23 228.80Z" fill="#007fff"/><path d="M1845.78 237.37 L1843.89 240.24 L1833.52 233.09 L1835.10 230.69Z" fill="#0077ff"/><path d="M1844.34 239.59 L1842.35 242.39 L1832.24 234.88 L1833.90 232.54Z" fill="#006eff"/><path d="M1842.82 241.75 L1840.74 244.49 L1830.89 236.63 L1832.63 234.35Z" fill="#0065ff"/><path d="M1841.23 243.87 L1839.05 246.53 L1829.49 238.33 L1831.30 236.11Z" fill="#005dff"/><path d="M1839.57 245.92 L1837.30 248.51 L1828.02 239.98 L1829.91 237.82Z" fill="#0055ff"/><path d="M1837.83 247.92 L1835.47 250.42 L1826.50 241.58 L1828.47 239.49Z" fill="#004cff"/><path d="M1836.03 249.86 L1833.58 252.27 L1824.92 243.12 L1826.96 241.10Z" fill="#0043ff"/><path d="M1834.16 251.73 L1831.63 254.06 L1823.29 244.61 L1825.40 242.66Z" fill="#003bff"/><path d="M1832.22 253.53 L1829.61 255.77 L1821.61 246.04 L1823.79 244.17Z" fill="#0033ff"/><path d="M1830.22 255.27 L1827.54 257.42 L1819.89 247.41 L1822.12 245.61Z" fill="#002aff"/><path d="M1828.17 256.93 L1825.41 258.99 L1818.11 248.72 L1820.41 247.00Z" fill="#0021ff"/><path d="M1826.05 258.52 L1823.23 260.48 L1816.29 249.96 L1818.65 248.33Z" fill="#0019ff"/><path d="M1823.89 260.04 L1820.99 261.90 L1814.43 251.14 L1816.84 249.60Z" fill="#0011ff"/><path d="M1821.67 261.48 L1818.71 263.24 L1812.53 252.26 L1814.99 250.80Z" fill="#0008ff"/><path d="M1819.40 262.84 L1816.38 264.50 L1810.58 253.31 L1813.10 251.93Z" fill="#0000ff"/><path d="M1817.09 264.13 L1814.01 265.67 L1808.61 254.29 L1811.17 253.00Z" fill="#0800ff"/><path d="M1814.73 265.33 L1811.60 266.77 L1806.60 255.20 L1809.21 254.00Z" fill="#1000ff"/><path d="M1812.33 266.45 L1809.16 267.77 L1804.56 256.04 L1807.21 254.94Z" fill="#1900ff"/><path d="M1809.90 267.48 L1806.68 268.70 L1802.49 256.81 L1805.18 255.80Z" fill="#2200ff"/><path d="M1807.43 268.43 L1804.17 269.53 L1800.40 257.51 L1803.12 256.59Z" fill="#2a00ff"/><path d="M1804.92 269.29 L1801.63 270.28 L1798.28 258.13 L1801.03 257.31Z" fill="#3300ff"/><path d="M1802.39 270.06 L1799.07 270.94 L1796.15 258.68 L1798.92 257.95Z" fill="#3b00ff"/><path d="M1799.84 270.75 L1796.48 271.50 L1793.99 259.15 L1796.79 258.52Z" fill="#4300ff"/><path d="M1797.26 271.34 L1793.88 271.98 L1791.82 259.55 L1794.64 259.02Z" fill="#4c00ff"/><path d="M1794.66 271.85 L1791.26 272.37 L1789.64 259.87 L1792.47 259.44Z" fill="#5400ff"/><path d="M1792.05 272.26 L1788.63 272.66 L1787.45 260.12 L1790.30 259.78Z" fill="#5d00ff"/><path d="M1789.42 272.58 L1786.00 272.87 L1785.25 260.29 L1788.11 260.05Z" fill="#6600ff"/><path d="M1786.79 272.82 L1783.35 272.98 L1783.04 260.38 L1785.91 260.25Z" fill="#6e00ff"/><path d="M1784.15 272.95 L1780.71 273.00 L1780.84 260.40 L1783.71 260.36Z" fill="#7700ff"/><path d="M1781.50 273.00 L1778.06 272.92 L1778.63 260.33 L1781.50 260.40Z" fill="#7f00ff"/><path d="M1778.85 272.95 L1775.42 272.76 L1776.43 260.20 L1779.29 260.36Z" fill="#8700ff"/><path d="M1776.21 272.82 L1772.79 272.50 L1774.24 259.98 L1777.09 260.25Z" fill="#9000ff"/><path d="M1773.58 272.58 L1770.17 272.15 L1772.05 259.69 L1774.89 260.05Z" fill="#9800ff"/><path d="M1770.95 272.26 L1767.56 271.71 L1769.87 259.32 L1772.70 259.78Z" fill="#a100ff"/><path d="M1768.34 271.85 L1764.96 271.17 L1767.71 258.88 L1770.53 259.44Z" fill="#aa00ff"/><path d="M1765.74 271.34 L1762.39 270.55 L1765.57 258.36 L1768.36 259.02Z" fill="#b200ff"/><path d="M1763.16 270.75 L1759.84 269.84 L1763.44 257.77 L1766.21 258.52Z" fill="#bb00ff"/><path d="M1760.61 270.06 L1757.32 269.04 L1761.34 257.10 L1764.08 257.95Z" fill="#c300ff"/><path d="M1758.08 269.29 L1754.83 268.15 L1759.26 256.36 L1761.97 257.31Z" fill="#cb00ff"/><path d="M1755.57 268.43 L1752.37 267.18 L1757.21 255.55 L1759.88 256.59Z" fill="#d400ff"/><path d="M1753.10 267.48 L1749.95 266.12 L1755.19 254.66 L1757.82 255.80Z" fill="#dc00ff"/><path d="M1750.67 266.45 L1747.56 264.98 L1753.20 253.71 L1755.79 254.94Z" fill="#e500ff"/><path d="M1748.27 265.33 L1745.22 263.75 L1751.25 252.69 L1753.79 254.00Z" fill="#ee00ff"/><path d="M1745.91 264.13 L1742.91 262.44 L1749.33 251.60 L1751.83 253.00Z" fill="#f600ff"/><path d="M1743.60 262.84 L1740.66 261.06 L1747.45 250.44 L1749.90 251.93Z" fill="#ff00ff"/><path d="M1741.33 261.48 L1738.46 259.59 L1745.61 249.22 L1748.01 250.80Z" fill="#ff00f6"/><path d="M1739.11 260.04 L1736.31 258.05 L1743.82 247.94 L1746.16 249.60Z" fill="#ff00ee"/><path d="M1736.95 258.52 L1734.21 256.44 L1742.07 246.59 L1744.35 248.33Z" fill="#ff00e5"/><path d="M1734.83 256.93 L1732.17 254.75 L1740.37 245.19 L1742.59 247.00Z" fill="#ff00dc"/><path d="M1732.78 255.27 L1730.19 253.00 L1738.72 243.72 L1740.88 245.61Z" fill="#ff00d4"/><path d="M1730.78 253.53 L1728.28 251.17 L1737.12 242.20 L1739.21 244.17Z" fill="#ff00cb"/><path d="M1728.84 251.73 L1726.43 249.28 L1735.58 240.62 L1737.60 242.66Z" fill="#ff00c3"/><path d="M1726.97 249.86 L1724.64 247.33 L1734.09 238.99 L1736.04 241.10Z" fill="#ff00bb"/><path d="M1725.17 247.92 L1722.93 245.31 L1732.66 237.31 L1734.53 239.49Z" fill="#ff00b2"/><path d="M1723.43 245.92 L1721.28 243.24 L1731.29 235.59 L1733.09 237.82Z" fill="#ff00aa"/><path d="M1721.77 243.87 L1719.71 241.11 L1729.98 233.81 L1731.70 236.11Z" fill="#ff00a1"/><path d="M1720.18 241.75 L1718.22 238.93 L1728.74 231.99 L1730.37 234.35Z" fill="#ff0098"/><path d="M1718.66 239.59 L1716.80 236.69 L1727.56 230.13 L1729.10 232.54Z" fill="#ff0090"/><path d="M1717.22 237.37 L1715.46 234.41 L1726.44 228.23 L1727.90 230.69Z" fill="#ff0087"/><path d="M1715.86 235.10 L1714.20 232.08 L1725.39 226.28 L1726.77 228.80Z" fill="#ff007f"/><path d="M1714.57 232.79 L1713.03 229.71 L1724.41 224.31 L1725.70 226.87Z" fill="#ff0077"/><path d="M1713.37 230.43 L1711.93 227.30 L1723.50 222.30 L1724.70 224.91Z" fill="#ff006e"/><path d="M1712.25 228.03 L1710.93 224.86 L1722.66 220.26 L1723.76 222.91Z" fill="#ff0066"/><path d="M1711.22 225.60 L1710.00 222.38 L1721.89 218.19 L1722.90 220.88Z" fill="#ff005d"/><path d="M1710.27 223.13 L1709.17 219.87 L1721.19 216.10 L1722.11 218.82Z" fill="#ff0054"/><path d="M1709.41 220.62 L1708.42 217.33 L1720.57 213.98 L1721.39 216.73Z" fill="#ff004c"/><path d="M1708.64 218.09 L1707.76 214.77 L1720.02 211.85 L1720.75 214.62Z" fill="#ff0043"/><path d="M1707.95 215.54 L1707.20 212.18 L1719.55 209.69 L1720.18 212.49Z" fill="#ff003b"/><path d="M1707.36 212.96 L1706.72 209.58 L1719.15 207.52 L1719.68 210.34Z" fill="#ff0033"/><path d="M1706.85 210.36 L1706.33 206.96 L1718.83 205.34 L1719.26 208.17Z" fill="#ff002a"/><path d="M1706.44 207.75 L1706.04 204.33 L1718.58 203.15 L1718.92 206.00Z" fill="#ff0022"/><path d="M1706.12 205.12 L1705.83 201.70 L1718.41 200.95 L1718.65 203.81Z" fill="#ff0019"/><path d="M1705.88 202.49 L1705.72 199.05 L1718.32 198.74 L1718.45 201.61Z" fill="#ff0010"/><path d="M1705.75 199.85 L1705.70 196.41 L1718.30 196.54 L1718.34 199.41Z" fill="#ff0008"/><path d="M1705.70 197.20 L1705.78 193.76 L1718.37 194.33 L1718.30 197.20Z" fill="#ff0000"/><path d="M1705.75 194.55 L1705.94 191.12 L1718.50 192.13 L1718.34 194.99Z" fill="#ff0800"/><path d="M1705.88 191.91 L1706.20 188.49 L1718.72 189.94 L1718.45 192.79Z" fill="#ff1000"/><path d="M1706.12 189.28 L1706.55 185.87 L1719.01 187.75 L1718.65 190.59Z" fill="#ff1900"/><path d="M1706.44 186.65 L1706.99 183.26 L1719.38 185.57 L1718.92 188.40Z" fill="#ff2100"/><path d="M1706.85 184.04 L1707.53 180.66 L1719.82 183.41 L1719.26 186.23Z" fill="#ff2a00"/><path d="M1707.36 181.44 L1708.15 178.09 L1720.34 181.27 L1719.68 184.06Z" fill="#ff3200"/><path d="M1707.95 178.86 L1708.86 175.54 L1720.93 179.14 L1720.18 181.91Z" fill="#ff3b00"/><path d="M1708.64 176.31 L1709.66 173.02 L1721.60 177.04 L1720.75 179.78Z" fill="#ff4300"/><path d="M1709.41 173.78 L1710.55 170.53 L1722.34 174.96 L1721.39 177.67Z" fill="#ff4c00"/><path d="M1710.27 171.27 L1711.52 168.07 L1723.15 172.91 L1722.11 175.58Z" fill="#ff5400"/><path d="M1711.22 168.80 L1712.58 165.65 L1724.04 170.89 L1722.90 173.52Z" fill="#ff5d00"/><path d="M1712.25 166.37 L1713.72 163.26 L1724.99 168.90 L1723.76 171.49Z" fill="#ff6600"/><path d="M1713.37 163.97 L1714.95 160.92 L1726.01 166.95 L1724.70 169.49Z" fill="#ff6e00"/><path d="M1714.57 161.61 L1716.26 158.61 L1727.10 165.03 L1725.70 167.53Z" fill="#ff7700"/><path d="M1715.86 159.30 L1717.64 156.36 L1728.26 163.15 L1726.77 165.60Z" fill="#ff7f00"/><path d="M1717.22 157.03 L1719.11 154.16 L1729.48 161.31 L1727.90 163.71Z" fill="#ff8800"/><path d="M1718.66 154.81 L1720.65 152.01 L1730.76 159.52 L1729.10 161.86Z" fill="#ff9000"/><path d="M1720.18 152.65 L1722.26 149.91 L1732.11 157.77 L1730.37 160.05Z" fill="#ff9900"/><path d="M1721.77 150.53 L1723.95 147.87 L1733.51 156.07 L1731.70 158.29Z" fill="#ffa100"/><path d="M1723.43 148.48 L1725.70 145.89 L1734.98 154.42 L1733.09 156.58Z" fill="#ffaa00"/><path d="M1725.17 146.48 L1727.53 143.98 L1736.50 152.82 L1734.53 154.91Z" fill="#ffb200"/><path d="M1726.97 144.54 L1729.42 142.13 L1738.08 151.28 L1736.04 153.30Z" fill="#ffbb00"/><path d="M1728.84 142.67 L1731.37 140.34 L1739.71 149.79 L1737.60 151.74Z" fill="#ffc300"/><path d="M1730.78 140.87 L1733.39 138.63 L1741.39 148.36 L1739.21 150.23Z" fill="#ffcc00"/><path d="M1732.78 139.13 L1735.46 136.98 L1743.11 146.99 L1740.88 148.79Z" fill="#ffd400"/><path d="M1734.83 137.47 L1737.59 135.41 L1744.89 145.68 L1742.59 147.40Z" fill="#ffdd00"/><path d="M1736.95 135.88 L1739.77 133.92 L1746.71 144.44 L1744.35 146.07Z" fill="#ffe500"/><path d="M1739.11 134.36 L1742.01 132.50 L1748.57 143.26 L1746.16 144.80Z" fill="#ffee00"/><path d="M1741.33 132.92 L1744.29 131.16 L1750.47 142.14 L1748.01 143.60Z" fill="#fff600"/><path d="M1743.60 131.56 L1746.62 129.90 L1752.42 141.09 L1749.90 142.47Z" fill="#ffff00"/><path d="M1745.91 130.27 L1748.99 128.73 L1754.39 140.11 L1751.83 141.40Z" fill="#f6ff00"/><path d="M1748.27 129.07 L1751.40 127.63 L1756.40 139.20 L1753.79 140.40Z" fill="#eeff00"/><path d="M1750.67 127.95 L1753.84 126.63 L1758.44 138.36 L1755.79 139.46Z" fill="#e5ff00"/><path d="M1753.10 126.92 L1756.32 125.70 L1760.51 137.59 L1757.82 138.60Z" fill="#ddff00"/><path d="M1755.57 125.97 L1758.83 124.87 L1762.60 136.89 L1759.88 137.81Z" fill="#d4ff00"/><path d="M1758.08 125.11 L1761.37 124.12 L1764.72 136.27 L1761.97 137.09Z" fill="#ccff00"/><path d="M1760.61 124.34 L1763.93 123.46 L1766.85 135.72 L1764.08 136.45Z" fill="#c3ff00"/><path d="M1763.16 123.65 L1766.52 122.90 L1769.01 135.25 L1766.21 135.88Z" fill="#bbff00"/><path d="M1765.74 123.06 L1769.12 122.42 L1771.18 134.85 L1768.36 135.38Z" fill="#b2ff00"/><path d="M1768.34 122.55 L1771.74 122.03 L1773.36 134.53 L1770.53 134.96Z" fill="#aaff00"/><path d="M1770.95 122.14 L1774.37 121.74 L1775.55 134.28 L1772.70 134.62Z" fill="#a1ff00"/><path d="M1773.58 121.82 L1777.00 121.53 L1777.75 134.11 L1774.89 134.35Z" fill="#99ff00"/><path d="M1776.21 121.58 L1779.65 121.42 L1779.96 134.02 L1777.09 134.15Z" fill="#90ff00"/><path d="M1778.85 121.45 L1782.29 121.40 L1782.16 134.00 L1779.29 134.04Z" fill="#88ff00"/><path d="M1781.50 121.40 L1784.94 121.48 L1784.37 134.07 L1781.50 134.00Z" fill="#7fff00"/><path d="M1784.15 121.45 L1787.58 121.64 L1786.57 134.20 L1783.71 134.04Z" fill="#76ff00"/><path d="M1786.79 121.58 L1790.21 121.90 L1788.76 134.42 L1785.91 134.15Z" fill="#6eff00"/><path d="M1789.42 121.82 L1792.83 122.25 L1790.95 134.71 L1788.11 134.35Z" fill="#65ff00"/><path d="M1792.05 122.14 L1795.44 122.69 L1793.13 135.08 L1790.30 134.62Z" fill="#5dff00"/><path d="M1794.66 122.55 L1798.04 123.23 L1795.29 135.52 L1792.47 134.96Z" fill="#54ff00"/><path d="M1797.26 123.06 L1800.61 123.85 L1797.43 136.04 L1794.64 135.38Z" fill="#4cff00"/><path d="M1799.84 123.65 L1803.16 124.56 L1799.56 136.63 L1796.79 135.88Z" fill="#43ff00"/><path d="M1802.39 124.34 L1805.68 125.36 L1801.66 137.30 L1798.92 136.45Z" fill="#3bff00"/><path d="M1804.92 125.11 L1808.17 126.25 L1803.74 138.04 L1801.03 137.09Z" fill="#32ff00"/><path d="M1807.43 125.97 L1810.63 127.22 L1805.79 138.85 L1803.12 137.81Z" fill="#2aff00"/><path d="M1809.90 126.92 L1813.05 128.28 L1807.81 139.74 L1805.18 138.60Z" fill="#21ff00"/><path d="M1812.33 127.95 L1815.44 129.42 L1809.80 140.69 L1807.21 139.46Z" fill="#19ff00"/><path d="M1814.73 129.07 L1817.78 130.65 L1811.75 141.71 L1809.21 140.40Z" fill="#10ff00"/><path d="M1817.09 130.27 L1820.09 131.96 L1813.67 142.80 L1811.17 141.40Z" fill="#08ff00"/><path d="M1819.40 131.56 L1822.34 133.34 L1815.55 143.96 L1813.10 142.47Z" fill="#00ff00"/><path d="M1821.67 132.92 L1824.54 134.81 L1817.39 145.18 L1814.99 143.60Z" fill="#00ff08"/><path d="M1823.89 134.36 L1826.69 136.35 L1819.18 146.46 L1816.84 144.80Z" fill="#00ff11"/><path d="M1826.05 135.88 L1828.79 137.96 L1820.93 147.81 L1818.65 146.07Z" fill="#00ff19"/><path d="M1828.17 137.47 L1830.83 139.65 L1822.63 149.21 L1820.41 147.40Z" fill="#00ff21"/><path d="M1830.22 139.13 L1832.81 141.40 L1824.28 150.68 L1822.12 148.79Z" fill="#00ff2a"/><path d="M1832.22 140.87 L1834.72 143.23 L1825.88 152.20 L1823.79 150.23Z" fill="#00ff33"/><path d="M1834.16 142.67 L1836.57 145.12 L1827.42 153.78 L1825.40 151.74Z" fill="#00ff3b"/><path d="M1836.03 144.54 L1838.36 147.07 L1828.91 155.41 L1826.96 153.30Z" fill="#00ff43"/><path d="M1837.83 146.48 L1840.07 149.09 L1830.34 157.09 L1828.47 154.91Z" fill="#00ff4c"/><path d="M1839.57 148.48 L1841.72 151.16 L1831.71 158.81 L1829.91 156.58Z" fill="#00ff55"/><path d="M1841.23 150.53 L1843.29 153.29 L1833.02 160.59 L1831.30 158.29Z" fill="#00ff5d"/><path d="M1842.82 152.65 L1844.78 155.47 L1834.26 162.41 L1832.63 160.05Z" fill="#00ff65"/><path d="M1844.34 154.81 L1846.20 157.71 L1835.44 164.27 L1833.90 161.86Z" fill="#00ff6e"/><path d="M1845.78 157.03 L1847.54 159.99 L1836.56 166.17 L1835.10 163.71Z" fill="#00ff77"/><path d="M1847.14 159.30 L1848.80 162.32 L1837.61 168.12 L1836.23 165.60Z" fill="#00ff7f"/><path d="M1848.43 161.61 L1849.97 164.69 L1838.59 170.09 L1837.30 167.53Z" fill="#00ff87"/><path d="M1849.63 163.97 L1851.07 167.10 L1839.50 172.10 L1838.30 169.49Z" fill="#00ff90"/><path d="M1850.75 166.37 L1852.07 169.54 L1840.34 174.14 L1839.24 171.49Z" fill="#00ff99"/><path d="M1851.78 168.80 L1853.00 172.02 L1841.11 176.21 L1840.10 173.52Z" fill="#00ffa1"/><path d="M1852.73 171.27 L1853.83 174.53 L1841.81 178.30 L1840.89 175.58Z" fill="#00ffa9"/><path d="M1853.59 173.78 L1854.58 177.07 L1842.43 180.42 L1841.61 177.67Z" fill="#00ffb2"/><path d="M1854.36 176.31 L1855.24 179.63 L1842.98 182.55 L1842.25 179.78Z" fill="#00ffbb"/><path d="M1855.05 178.86 L1855.80 182.22 L1843.45 184.71 L1842.82 181.91Z" fill="#00ffc3"/><path d="M1855.64 181.44 L1856.28 184.82 L1843.85 186.88 L1843.32 184.06Z" fill="#00ffcb"/><path d="M1856.15 184.04 L1856.67 187.44 L1844.17 189.06 L1843.74 186.23Z" fill="#00ffd4"/><path d="M1856.56 186.65 L1856.96 190.07 L1844.42 191.25 L1844.08 188.40Z" fill="#00ffdd"/><path d="M1856.88 189.28 L1857.17 192.70 L1844.59 193.45 L1844.35 190.59Z" fill="#00ffe5"/><path d="M1857.12 191.91 L1857.28 195.35 L1844.68 195.66 L1844.55 192.79Z" fill="#00ffed"/><path d="M1857.25 194.55 L1857.30 197.99 L1844.70 197.86 L1844.66 194.99Z" fill="#00fff6"/></g>
<rect x="1705.7" y="194.5" width="12.6" height="2" fill="#e08080"/><rect x="1705.7" y="196.5" width="12.6" height="1" fill="#600000"/>
<defs><linearGradient id="tri1" gradientUnits="userSpaceOnUse" x1="0" y1="136" x2="0" y2="229"><stop offset="0" stop-color="#000000"/><stop offset="1" stop-color="#ff0000"/></linearGradient><linearGradient id="tri2" gradientUnits="userSpaceOnUse" x1="1807.9" y1="181.8" x2="1727" y2="229"><stop offset="0" stop-color="#000000"/><stop offset="1" stop-color="#00ffff"/></linearGradient></defs>
<g style="isolation:isolate"><path d="M1781.2 136 L1835.5 229 L1727 229 Z" fill="url(#tri1)"/><path d="M1781.2 136 L1835.5 229 L1727 229 Z" fill="url(#tri2)" style="mix-blend-mode:screen"/></g>
<circle cx="1781.2" cy="136" r="3" fill="none" stroke="#c0c0c0" stroke-width="1"/>
<defs><linearGradient id="sl2" x1="0" x2="1"><stop offset="0" stop-color="#000"/><stop offset="1" stop-color="#9c4646"/></linearGradient><linearGradient id="sl3" x1="0" x2="1"><stop offset="0" stop-color="#000"/><stop offset="1" stop-color="#a4a4a4"/></linearGradient></defs>
<rect x="1659" y="274" width="244" height="10" fill="#000" />
<rect x="1659" y="285" width="244" height="10" fill="#000" />
<rect x="1787" y="285" width="116" height="10" fill="url(#sl2)" />
<rect x="1659" y="296" width="244" height="10" fill="#000" />
<rect x="1787" y="296" width="116" height="10" fill="url(#sl3)" />
<rect x="1776.5" y="274" width="1.3" height="32" fill="#a8a8a8" />
<rect x="1785.7" y="274" width="1.3" height="32" fill="#a8a8a8" />
<rect x="1659" y="308" width="260" height="17" fill="#3f3f3f" />
<path d="M1662 318 A5.5 5.5 0 0 1 1670.5 312.5 M1672.5 316 A5.5 5.5 0 0 1 1664 321.5" stroke="#d8d8d8" stroke-width="1.6" fill="none"/><path d="M1670 310 L1673 314 L1668.5 314.5 Z M1664.5 324 L1661.5 320 L1666 319.5 Z" fill="#d8d8d8"/>
<rect x="1782" y="328.5" width="1.5" height="1.5" fill="#9a9a9a" />
<rect x="1785" y="328.5" width="1.5" height="1.5" fill="#9a9a9a" />
<rect x="1788" y="328.5" width="1.5" height="1.5" fill="#9a9a9a" />
<rect x="1791" y="328.5" width="1.5" height="1.5" fill="#9a9a9a" />
<rect x="1794" y="328.5" width="1.5" height="1.5" fill="#9a9a9a" />
<rect x="1797" y="328.5" width="1.5" height="1.5" fill="#9a9a9a" />
<rect x="1655.5" y="540" width="1" height="1.5" fill="#8a8a8a" />
<rect x="1655.5" y="543" width="1" height="1.5" fill="#8a8a8a" />
<rect x="1655.5" y="546" width="1" height="1.5" fill="#8a8a8a" />
<rect x="1655.5" y="549" width="1" height="1.5" fill="#8a8a8a" />
<rect x="1655.5" y="552" width="1" height="1.5" fill="#8a8a8a" />
<rect x="1655.5" y="555" width="1" height="1.5" fill="#8a8a8a" />
<circle cx="1668" cy="340" r="7.5" fill="none" stroke="#d8d8d8" stroke-width="1.1"/><path d="M1665.5 340 V338 Q1665.5 335.5 1668 335.5 Q1670.5 335.5 1670.5 338" fill="none" stroke="#d8d8d8" stroke-width="1.2"/><rect x="1664" y="340" width="8" height="4.5" fill="#d8d8d8"/>
<text x="1682" y="344.2" font-size="12" fill="#d8d8d8" textLength="44" lengthAdjust="spacingAndGlyphs" >Warstwy</text>
<rect x="1880.5" y="337.5" width="8" height="8" fill="none" stroke="#d8d8d8" stroke-width="1.1"/><path d="M1884.5 337.5 V333.5 H1894.5 V341.5 H1888.5" fill="none" stroke="#d8d8d8" stroke-width="1.1"/>
<path d="M1904.5 334 L1915 344.5 M1915 334 L1904.5 344.5" stroke="#d8d8d8" stroke-width="1.3"/>
<rect x="1660.5" y="350.5" width="224" height="29" fill="#474747" rx="3" stroke="#545454" stroke-width="1"/>
<text x="1664" y="370" font-size="12" fill="#8c8c8c" textLength="44" lengthAdjust="spacingAndGlyphs" >Normalny</text>
<path d="M1870 363 H1878 L1874 367 Z" fill="#7a7a7a"/>
<path d="M1895.5 356.5 H1909.5 L1904 364 V373 L1901 370.5 V364 Z" fill="none" stroke="#d8d8d8" stroke-width="1.3"/><path d="M1910 375 H1916 L1913 378 Z" fill="#bdbdbd"/>
<rect x="1659.5" y="384.5" width="225" height="28" fill="#343434" rx="3" stroke="#505050" stroke-width="1"/>
<rect x="1872" y="385" width="12" height="27" fill="#383838" />
<path d="M1874.5 394 L1878 390.5 L1881.5 394 Z M1874.5 403 L1878 406.5 L1881.5 403 Z" fill="#555"/>
<text x="1705" y="403" font-size="12" fill="#8c8c8c" textLength="120" lengthAdjust="spacingAndGlyphs" >Nieprzezroczystość:  0%</text>
<path d="M1896 393.5 H1910 M1896 398 H1910 M1896 402.5 H1910" stroke="#d8d8d8" stroke-width="1.6"/><path d="M1910 408 H1916 L1913 411 Z" fill="#bdbdbd"/>
<rect x="1659" y="415" width="260" height="193" fill="#383838" />
<rect x="1659" y="441.5" width="260" height="1" fill="#3e3e3e" />
<rect x="1659" y="468.5" width="260" height="1" fill="#3e3e3e" />
<path d="M1664 430 Q1671 422 1678 430" fill="none" stroke="#cfcfcf" stroke-width="1.1"/><path d="M1664 430 Q1671 437 1678 430" fill="none" stroke="#cfcfcf" stroke-width="1.6"/><circle cx="1671" cy="429" r="3.6" fill="#cfcfcf"/>
<rect x="1686" y="423" width="14" height="14" fill="#2e2e2e" />
<rect x="1710" y="420" width="15" height="20" fill="url(#chk2)" />
<path d="M1738.5 420 V417.5 H1746.5 V425.5 H1743" fill="none" stroke="#d8d8d8" stroke-width="1.1"/><path d="M1735 419 L1742 426" stroke="#d8d8d8" stroke-width="1.1"/><path d="M1743 427 V422.5 L1738.5 427 Z" fill="#d8d8d8"/>
<text x="1748" y="434.2" font-size="12" fill="#dedede" textLength="25" lengthAdjust="spacingAndGlyphs" >cialo</text>
<path d="M1863 429 H1876 V437 H1863 Z" fill="#707070"/><path d="M1871 429 V425 Q1871 422 1868 422" fill="none" stroke="#707070" stroke-width="1.5"/>
<text x="1880" y="435" font-size="17" fill="#6e6e6e" font-style="italic" font-weight="bold">α</text>
<rect x="1900" y="423" width="5" height="5" fill="#6c6c6c" />
<rect x="1900" y="428" width="5" height="5" fill="#4e4e4e" />
<rect x="1900" y="433" width="5" height="5" fill="#6c6c6c" />
<rect x="1905" y="423" width="5" height="5" fill="#4e4e4e" />
<rect x="1905" y="428" width="5" height="5" fill="#6c6c6c" />
<rect x="1905" y="433" width="5" height="5" fill="#4e4e4e" />
<rect x="1910" y="423" width="5" height="5" fill="#6c6c6c" />
<rect x="1910" y="428" width="5" height="5" fill="#4e4e4e" />
<rect x="1910" y="433" width="5" height="5" fill="#6c6c6c" />
<path d="M1664 457 Q1671 449 1678 457" fill="none" stroke="#cfcfcf" stroke-width="1.1"/><path d="M1664 457 Q1671 464 1678 457" fill="none" stroke="#cfcfcf" stroke-width="1.6"/><circle cx="1671" cy="456" r="3.6" fill="#cfcfcf"/>
<rect x="1686" y="450" width="14" height="14" fill="#2e2e2e" />
<rect x="1708" y="449" width="20" height="14" fill="#ffffff" />
<path d="M1738.5 447 V444.5 H1746.5 V452.5 H1743" fill="none" stroke="#d8d8d8" stroke-width="1.1"/><path d="M1735 446 L1742 453" stroke="#d8d8d8" stroke-width="1.1"/><path d="M1743 454 V449.5 L1738.5 454 Z" fill="#d8d8d8"/>
<text x="1748" y="461.2" font-size="12" fill="#dedede" textLength="16" lengthAdjust="spacingAndGlyphs" >tło</text>
<path d="M1863 456 H1876 V464 H1863 Z" fill="#707070"/><path d="M1871 456 V452 Q1871 449 1868 449" fill="none" stroke="#707070" stroke-width="1.5"/>
<text x="1880" y="462" font-size="17" fill="#6e6e6e" font-style="italic" font-weight="bold">α</text>
<rect x="1900" y="450" width="5" height="5" fill="#6c6c6c" />
<rect x="1900" y="455" width="5" height="5" fill="#4e4e4e" />
<rect x="1900" y="460" width="5" height="5" fill="#6c6c6c" />
<rect x="1905" y="450" width="5" height="5" fill="#4e4e4e" />
<rect x="1905" y="455" width="5" height="5" fill="#6c6c6c" />
<rect x="1905" y="460" width="5" height="5" fill="#4e4e4e" />
<rect x="1910" y="450" width="5" height="5" fill="#6c6c6c" />
<rect x="1910" y="455" width="5" height="5" fill="#4e4e4e" />
<rect x="1910" y="460" width="5" height="5" fill="#6c6c6c" />
<defs><pattern id="chk2" width="6" height="6" patternUnits="userSpaceOnUse" x="1710" y="420"><rect width="6" height="6" fill="#ffffff"/><rect width="3" height="3" fill="#e0e0e0"/><rect x="3" y="3" width="3" height="3" fill="#e0e0e0"/></pattern></defs>
<path d="M1674 614 V632 M1665 623 H1683" stroke="#d8d8d8" stroke-width="1.6"/><path d="M1691 621.5 H1699 L1695 625.5 Z" fill="#a0a0a0"/>
<rect x="1711.5" y="613.5" width="16" height="15" fill="none" stroke="#d8d8d8" stroke-width="1.4"/><path d="M1708.5 616 V632.5 H1725" fill="none" stroke="#d8d8d8" stroke-width="1.4"/>
<path d="M1740 617.5 L1750 627.5 L1760 617.5" fill="none" stroke="#d8d8d8" stroke-width="1.6"/><path d="M1772 630 L1782 620 L1792 630" fill="none" stroke="#d8d8d8" stroke-width="1.6"/>
<path d="M1804 617 H1824 M1804 623 H1824 M1804 629 H1824" stroke="#d8d8d8" stroke-width="1.6"/><circle cx="1819" cy="617" r="1.8" fill="#d8d8d8"/><circle cx="1810" cy="623" r="1.8" fill="#d8d8d8"/><circle cx="1814" cy="629" r="1.8" fill="#d8d8d8"/><path d="M1831 621.5 H1839 L1835 625.5 Z" fill="#a0a0a0"/>
<path d="M1895 617 H1913 M1900 617 V614 H1908 V617" fill="none" stroke="#d8d8d8" stroke-width="1.5"/><path d="M1897 619 H1911 V631 Q1911 633 1909 633 H1899 Q1897 633 1897 631 Z" fill="#d8d8d8"/>
<rect x="1782" y="641.5" width="1.5" height="1.5" fill="#9a9a9a" />
<rect x="1785" y="641.5" width="1.5" height="1.5" fill="#9a9a9a" />
<rect x="1788" y="641.5" width="1.5" height="1.5" fill="#9a9a9a" />
<rect x="1791" y="641.5" width="1.5" height="1.5" fill="#9a9a9a" />
<rect x="1794" y="641.5" width="1.5" height="1.5" fill="#9a9a9a" />
<rect x="1797" y="641.5" width="1.5" height="1.5" fill="#9a9a9a" />
<circle cx="1668" cy="653" r="7.5" fill="none" stroke="#d8d8d8" stroke-width="1.1"/><path d="M1665.5 653 V651 Q1665.5 648.5 1668 648.5 Q1670.5 648.5 1670.5 651" fill="none" stroke="#d8d8d8" stroke-width="1.2"/><rect x="1664" y="653" width="8" height="4.5" fill="#d8d8d8"/>
<text x="1682" y="657.2" font-size="12" fill="#d8d8d8" textLength="81" lengthAdjust="spacingAndGlyphs" >Pędzle z nastaw</text>
<rect x="1880.5" y="650.5" width="8" height="8" fill="none" stroke="#d8d8d8" stroke-width="1.1"/><path d="M1884.5 650.5 V646.5 H1894.5 V654.5 H1888.5" fill="none" stroke="#d8d8d8" stroke-width="1.1"/>
<path d="M1904.5 647 L1915 657.5 M1915 647 L1904.5 657.5" stroke="#d8d8d8" stroke-width="1.3"/>
<rect x="1660.5" y="663.5" width="130" height="21" fill="#474747" rx="3" stroke="#545454" stroke-width="1"/>
<text x="1664" y="679" font-size="12" fill="#dedede" textLength="41" lengthAdjust="spacingAndGlyphs" >Cyfrowy</text>
<path d="M1777 672 H1785 L1781 676 Z" fill="#a0a0a0"/>
<rect x="1793.5" y="663.5" width="76" height="20" fill="#474747" rx="3" stroke="#545454" stroke-width="1"/>
<path d="M1798.5 665.5 H1807.5 V680.5 L1803 676 L1798.5 680.5 Z" fill="none" stroke="#d8d8d8" stroke-width="1.3"/>
<text x="1813" y="679" font-size="12" fill="#dedede" textLength="45" lengthAdjust="spacingAndGlyphs" >Znacznik</text>
<path d="M1863 678 H1868 L1865.5 681 Z" fill="#a0a0a0"/>
<path d="M1877 668.5 H1889 M1877 673 H1889 M1877 677.5 H1889" stroke="#d8d8d8" stroke-width="1.5"/>
<rect x="1899.5" y="665.5" width="15" height="15" fill="none" stroke="#d8d8d8" stroke-width="1.1"/><path d="M1907 667 V674" stroke="#d8d8d8" stroke-width="1" stroke-dasharray="1 1"/>
<rect x="1905" y="688" width="12" height="302" fill="#3e3e3e" />
<rect x="1905.5" y="688.5" width="11" height="13" fill="#444" stroke="#383838" stroke-width="1"/>
<path d="M1907.5 698 L1911 694.5 L1914.5 698 Z" fill="#aaa"/>
<rect x="1905.5" y="702.5" width="11" height="120" fill="#444444" stroke="#383838" stroke-width="1"/>
<rect x="1905.5" y="975.5" width="11" height="13" fill="#444" stroke="#383838" stroke-width="1"/>
<path d="M1907.5 980 L1911 983.5 L1914.5 980 Z" fill="#aaa"/>
<rect x="1660" y="686" width="243" height="304" fill="#363636" />
<defs><pattern id="chk3" width="5" height="5" patternUnits="userSpaceOnUse"><rect width="5" height="5" fill="#f2f2f2"/><rect width="2.5" height="2.5" fill="#9a9a9a"/><rect x="2.5" y="2.5" width="2.5" height="2.5" fill="#9a9a9a"/></pattern><radialGradient id="blob4"><stop offset="0" stop-color="#2a2a2a"/><stop offset=".6" stop-color="#333" stop-opacity=".9"/><stop offset="1" stop-color="#444" stop-opacity="0"/></radialGradient><linearGradient id="silv" x1="0" y1="0" x2="0" y2="1"><stop offset="0" stop-color="#f4f4f4"/><stop offset=".5" stop-color="#b8b8b8"/><stop offset="1" stop-color="#707070"/></linearGradient><linearGradient id="blk" x1="0" y1="0" x2="0" y2="1"><stop offset="0" stop-color="#555"/><stop offset=".4" stop-color="#222"/><stop offset="1" stop-color="#111"/></linearGradient><linearGradient id="gwave" x1="0" x2="1"><stop offset="0" stop-color="#999" stop-opacity=".5"/><stop offset="1" stop-color="#222"/></linearGradient><radialGradient id="wsoft"><stop offset="0" stop-color="#fff"/><stop offset=".7" stop-color="#fff" stop-opacity=".8"/><stop offset="1" stop-color="#fff" stop-opacity="0"/></radialGradient><linearGradient id="silvc" x1="0" y1="0" x2="0" y2="1"><stop offset="0" stop-color="#fafafa"/><stop offset=".45" stop-color="#b0b0b0"/><stop offset="1" stop-color="#555"/></linearGradient><filter id="blr" x="-50%" y="-50%" width="200%" height="200%"><feGaussianBlur stdDeviation="1.2"/></filter><filter id="blr2" x="-50%" y="-50%" width="200%" height="200%"><feGaussianBlur stdDeviation="2.5"/></filter></defs>
<defs><clipPath id="bc1"><rect x="1661" y="688" width="58" height="58"/></clipPath></defs>
<rect x="1661" y="688" width="58" height="58" fill="#d3d3d3" />
<g clip-path="url(#bc1)">
<g transform="translate(1661 688)"><path d="M12 40 Q12 56 30 56 Q45 56 55 48" fill="none" stroke="url(#chk3)" stroke-width="9" opacity=".9"/></g>
<g transform="translate(1661 688)"><path d="M27 9 L36 0 H58 V22 L41 32 Z" fill="#3a5f9e"/><path d="M20 13 L27 9 L41 24 L41 30 L31 39 L21 29 Q19 21 20 13 Z" fill="#f4f4f4"/><path d="M41 24 L41 30 L31 39 L29 33 Z" fill="#c8c8c8"/></g>
</g>
<defs><clipPath id="bc2"><rect x="1721" y="688" width="58" height="58"/></clipPath></defs>
<rect x="1721" y="688" width="58" height="58" fill="#d3d3d3" />
<g clip-path="url(#bc2)">
<g transform="translate(1721 688)"><path d="M18 40 Q20 53 33 51 Q42 49 46 40" fill="none" stroke="url(#chk3)" stroke-width="4"/></g>
<g transform="translate(1744 719) rotate(-45)"><path d="M0 -3.5 L7 -4.0 L7 4.0 L0 3.5 Z" fill="#f4f4f4"/><path d="M7 -5.0 L10 -5.0 L10 5.0 L7 5.0 Z" fill="#a0a0a0"/><path d="M10 -6.5 L55 -7.0 L55 7.0 L10 6.5 Z" fill="#3a66cc"/></g>
</g>
<defs><clipPath id="bc3"><rect x="1781" y="688" width="58" height="58"/></clipPath></defs>
<rect x="1781" y="688" width="58" height="58" fill="#d3d3d3" />
<g clip-path="url(#bc3)">
<g transform="translate(1781 688)"><path d="M3 42 Q20 40 45 48" fill="none" stroke="url(#chk3)" stroke-width="9" opacity=".55"/></g>
<g transform="translate(1781 688)"><path d="M24 36 Q22 24 30 12 Q36 2 50 0 H58 V22 Q50 34 36 37 Q28 39 24 36 Z" fill="#7a7a7a"/><path d="M30 30 Q32 18 42 8" stroke="#9a9a9a" stroke-width="4" fill="none" opacity=".6"/></g>
</g>
<defs><clipPath id="bc4"><rect x="1841" y="688" width="58" height="58"/></clipPath></defs>
<rect x="1841" y="688" width="58" height="58" fill="#d3d3d3" />
<g clip-path="url(#bc4)">
<g transform="translate(1841 688)"><circle cx="8" cy="46" r="22" fill="url(#blob4)"/></g>
<g transform="translate(1866 722) rotate(-45)"><path d="M0 -1.0 L10 -5.0 L10 5.0 L0 1.0 Z" fill="url(#silvc)"/><path d="M10 -5.5 L14 -5.5 L14 5.5 L10 5.5 Z" fill="#d0d0d0"/><path d="M14 -6.0 L19 -6.0 L19 6.0 L14 6.0 Z" fill="#111"/><path d="M19 -6.0 L64 -6.5 L64 6.5 L19 6.0 Z" fill="url(#silv)"/></g>
</g>
<defs><clipPath id="bc5"><rect x="1661" y="748" width="58" height="58"/></clipPath></defs>
<rect x="1661" y="748" width="58" height="58" fill="#d3d3d3" />
<g clip-path="url(#bc5)">
<g transform="translate(1661 748)"><path d="M21 47 Q36 52 58 40" fill="none" stroke="#222" stroke-width="6" stroke-linecap="round" stroke-linejoin="round"/></g>
<g transform="translate(1682 784) rotate(-45)"><path d="M0 -1.0 L11 -5.0 L11 5.0 L0 1.0 Z" fill="url(#silvc)"/><path d="M11 -5.5 L13 -5.5 L13 5.5 L11 5.5 Z" fill="#555"/><path d="M13 -6.0 L63 -6.5 L63 6.5 L13 6.0 Z" fill="url(#blk)"/></g>
</g>
<defs><clipPath id="bc6"><rect x="1721" y="748" width="58" height="58"/></clipPath></defs>
<rect x="1721" y="748" width="58" height="58" fill="#d3d3d3" />
<g clip-path="url(#bc6)">
<g transform="translate(1721 748)"><path d="M17 40 Q20 52 36 49 Q48 46 58 40" fill="none" stroke="url(#gwave)" stroke-width="4" stroke-linecap="round" stroke-linejoin="round"/></g>
<g transform="translate(1742 784) rotate(-45)"><path d="M0 -1.0 L14 -6.0 L14 6.0 L0 1.0 Z" fill="#1a1a1a"/><path d="M14 -6.5 L64 -6.5 L64 6.5 L14 6.5 Z" fill="url(#blk)"/></g>
</g>
<defs><clipPath id="bc7"><rect x="1781" y="748" width="58" height="58"/></clipPath></defs>
<rect x="1781" y="748" width="58" height="58" fill="#d3d3d3" />
<g clip-path="url(#bc7)">
<g transform="translate(1781 748)"><path d="M15 43 Q22 52 35 46 Q45 41 58 42" fill="none" stroke="url(#gwave)" stroke-width="5" stroke-linecap="round" filter="url(#blr)"/></g>
<g transform="translate(1804 784) rotate(-45)"><path d="M0 -1.0 L11 -5.0 L11 5.0 L0 1.0 Z" fill="url(#silvc)"/><path d="M11 -5.0 L12.5 -5.0 L12.5 5.0 L11 5.0 Z" fill="#c07040"/><path d="M12.5 -6.0 L62.5 -6.5 L62.5 6.5 L12.5 6.0 Z" fill="url(#silv)"/></g>
</g>
<defs><clipPath id="bc8"><rect x="1841" y="748" width="58" height="58"/></clipPath></defs>
<rect x="1841" y="748" width="58" height="58" fill="#d3d3d3" />
<g clip-path="url(#bc8)">
<g transform="translate(1841 748)"><path d="M17 42 Q26 50 38 45 Q48 40 58 44" fill="none" stroke="#666" stroke-width="6" opacity=".55" stroke-linecap="round" filter="url(#blr)"/></g>
<g transform="translate(1863 785) rotate(-45)"><path d="M0 -1.0 L11 -5.0 L11 5.0 L0 1.0 Z" fill="url(#silvc)"/><path d="M11 -5.0 L13 -5.0 L13 5.0 L11 5.0 Z" fill="#999"/><path d="M13 -6.0 L63 -6.5 L63 6.5 L13 6.0 Z" fill="#7a7a7a"/></g>
</g>
<rect x="1660" y="807" width="60" height="60" fill="#587b9e" />
<rect x="1664" y="811" width="52" height="52" fill="#8bbbdb" />
<defs><clipPath id="hc"><rect x="1664" y="811" width="52" height="52"/></clipPath></defs><g clip-path="url(#hc)">
<g transform="translate(1661 808)"><path d="M19 36 Q15 44 24 45 Q32 46 32 40 Q34 48 42 46 Q50 44 55 41" fill="none" stroke="#203460" stroke-width="5" stroke-linecap="round" stroke-linejoin="round"/></g>
<g transform="translate(1682 840) rotate(-45)"><path d="M0 -0.5 L4 -2.0 L4 2.0 L0 0.5 Z" fill="#1a1030"/><path d="M4 -3.0 L12 -2.5 L12 2.5 L4 3.0 Z" fill="#2a1a40"/><path d="M12 -2.5 L15 -2.5 L15 2.5 L12 2.5 Z" fill="#ccc"/><path d="M15 -3.0 L29 -3.0 L29 3.0 L15 3.0 Z" fill="#a8b8e0"/><path d="M29 -3.0 L49 -3.5 L49 3.5 L29 3.0 Z" fill="#384a70"/></g>
</g>
<defs><clipPath id="bc9"><rect x="1721" y="808" width="58" height="58"/></clipPath></defs>
<rect x="1721" y="808" width="58" height="58" fill="#d3d3d3" />
<g clip-path="url(#bc9)">
<g transform="translate(1721 808)"><path d="M18 38 Q14 46 24 46 Q33 44 33 39 Q34 50 44 46 Q52 42 58 40" fill="none" stroke="url(#gwave)" stroke-width="5" stroke-linecap="round" stroke-linejoin="round"/></g>
<g transform="translate(1741 840) rotate(-45)"><path d="M0 -0.5 L4 -2.5 L4 2.5 L0 0.5 Z" fill="#5a3a2a"/><path d="M4 -3.5 L11 -3.0 L11 3.0 L4 3.5 Z" fill="#8a5a40"/><path d="M11 -2.5 L15 -2.5 L15 2.5 L11 2.5 Z" fill="#ddd"/><path d="M15 -2.5 L29 -3.0 L29 3.0 L15 2.5 Z" fill="#c8c0e0"/><path d="M29 -3.0 L54 -3.5 L54 3.5 L29 3.0 Z" fill="#e0a030"/></g>
</g>
<defs><clipPath id="bc10"><rect x="1781" y="808" width="58" height="58"/></clipPath></defs>
<rect x="1781" y="808" width="58" height="58" fill="#d3d3d3" />
<g clip-path="url(#bc10)">
<g transform="translate(1781 808)"><path d="M14 46 Q12 40 22 38 Q28 38 26 46 Q28 54 42 46 Q50 41 58 36" fill="none" stroke="url(#gwave)" stroke-width="2" stroke-linecap="round" stroke-linejoin="round"/></g>
<g transform="translate(1804 840) rotate(-45)"><path d="M0 -0.5 L4 -1.5 L4 1.5 L0 0.5 Z" fill="#3a2020"/><path d="M4 -2.0 L10 -2.0 L10 2.0 L4 2.0 Z" fill="#7a4a4a"/><path d="M10 -2.0 L14 -2.0 L14 2.0 L10 2.0 Z" fill="#ddd"/><path d="M14 -2.0 L28 -2.5 L28 2.5 L14 2.0 Z" fill="#d0c8e0"/><path d="M28 -2.5 L53 -3.0 L53 3.0 L28 2.5 Z" fill="#e08a20"/></g>
</g>
<defs><clipPath id="bc11"><rect x="1841" y="808" width="58" height="58"/></clipPath></defs>
<rect x="1841" y="808" width="58" height="58" fill="#d3d3d3" />
<g clip-path="url(#bc11)">
<g transform="translate(1841 808)"><path d="M13 41 Q15 45 17 41 Q19 36 21 44 Q23 38 26 43 Q28 38 31 43 Q34 40 36 44 Q38 40 41 43 Q44 40 46 44 Q49 40 52 43 Q55 39 58 42" fill="none" stroke="#333" stroke-width="1"/></g>
<g transform="translate(1860 843) rotate(-45)"><path d="M0 -0.5 L3 -1.5 L3 1.5 L0 0.5 Z" fill="#333"/><path d="M3 -2.0 L12 -4.0 L12 4.0 L3 2.0 Z" fill="#3a3a3a"/><path d="M12 -6.0 L62 -6.5 L62 6.5 L12 6.0 Z" fill="#55555e"/></g>
</g>
<defs><clipPath id="bc12"><rect x="1661" y="868" width="58" height="58"/></clipPath></defs>
<rect x="1661" y="868" width="58" height="58" fill="#d3d3d3" />
<g clip-path="url(#bc12)">
<g transform="translate(1661 868)"><path d="M16 40 Q14 52 34 50 Q48 49 58 42" fill="none" stroke="#000" stroke-width="1.6"/></g>
<g transform="translate(1682 903) rotate(-45)"><path d="M0 -0.75 L10 -2.5 L10 2.5 L0 0.75 Z" fill="#666"/><path d="M10 -3.0 L16 -4.5 L16 4.5 L10 3.0 Z" fill="url(#silvc)"/><path d="M16 -5.0 L21 -5.0 L21 5.0 L16 5.0 Z" fill="#4a80b0"/><path d="M21 -5.0 L26 -5.0 L26 5.0 L21 5.0 Z" fill="#333"/><path d="M26 -5.5 L71 -6.0 L71 6.0 L26 5.5 Z" fill="url(#silv)"/></g>
</g>
<defs><clipPath id="bc13"><rect x="1721" y="868" width="58" height="58"/></clipPath></defs>
<rect x="1721" y="868" width="58" height="58" fill="#d3d3d3" />
<g clip-path="url(#bc13)">
<defs><linearGradient id="gwave2" x1="0" x2="1"><stop offset="0" stop-color="#1a1a1a"/><stop offset="1" stop-color="#aaaaaa"/></linearGradient></defs>
<g transform="translate(1721 868)"><path d="M17 42 Q12 51 20 51 Q27 50 30 45 Q31 53 39 51 Q45 49 47 44 Q49 53 57 49" fill="none" stroke="url(#gwave2)" stroke-width="6" stroke-linecap="round" stroke-linejoin="round"/></g>
<g transform="translate(1721 868)"><path d="M10 13 Q14 8 19 12 M19 14 Q15 19 11 15" stroke="#777" stroke-width="2" fill="none"/></g>
<g transform="translate(1745 902) rotate(-45)"><path d="M0 -3.0 L4 -3.5 L4 3.5 L0 3.0 Z" fill="#333"/><path d="M4 -4.0 L14 -6.0 L14 6.0 L4 4.0 Z" fill="#3a4458"/><path d="M14 -6.5 L59 -7.0 L59 7.0 L14 6.5 Z" fill="#5072b0"/></g>
</g>
<defs><clipPath id="bc14"><rect x="1781" y="868" width="58" height="58"/></clipPath></defs>
<rect x="1781" y="868" width="58" height="58" fill="#d3d3d3" />
<g clip-path="url(#bc14)">
<g transform="translate(1781 868)"><path d="M18 41 Q14 50 24 50 Q32 49 34 43 Q34 52 44 48 Q52 44 58 40" fill="none" stroke="url(#gwave)" stroke-width="3.5" stroke-linecap="round" stroke-linejoin="round"/></g>
<g transform="translate(1804 903) rotate(-45)"><path d="M0 -1.5 L4 -3.0 L4 3.0 L0 1.5 Z" fill="#c08090"/><path d="M4 -3.0 L15 -6.0 L15 6.0 L4 3.0 Z" fill="#4a4030"/><path d="M15 -6.5 L60 -7.0 L60 7.0 L15 6.5 Z" fill="#c46888"/></g>
</g>
<defs><clipPath id="bc15"><rect x="1841" y="868" width="58" height="58"/></clipPath></defs>
<rect x="1841" y="868" width="58" height="58" fill="#d3d3d3" />
<g clip-path="url(#bc15)">
<g transform="translate(1841 868)"><path d="M14 41 Q30 42 58 52" fill="none" stroke="#333" stroke-width="10" opacity=".7" filter="url(#blr2)"/></g>
<g transform="translate(1841 868)"><path d="M10 13 Q14 8 19 12 M19 14 Q15 19 11 15" stroke="#777" stroke-width="2" fill="none"/></g>
<g transform="translate(1865 899) rotate(-45)"><path d="M0 -3.5 L5 -4.0 L5 4.0 L0 3.5 Z" fill="#70b0e0"/><path d="M5 -4.0 L16 -7.5 L16 7.5 L5 4.0 Z" fill="#4a4a38"/><path d="M16 -8.0 L61 -8.5 L61 8.5 L16 8.0 Z" fill="#5ea0d0"/></g>
</g>
<defs><clipPath id="bc16"><rect x="1661" y="928" width="58" height="58"/></clipPath></defs>
<rect x="1661" y="928" width="58" height="58" fill="#d3d3d3" />
<g clip-path="url(#bc16)">
<g transform="translate(1661 928)"><path d="M22 36 Q12 42 16 52 Q24 58 44 56" fill="none" stroke="#fff" stroke-width="9" stroke-linecap="round" filter="url(#blr)"/></g>
<g transform="translate(1661 928)"><path d="M16 9 Q12 14 12 16 Q12 19 15 19 Q18 19 18 16 Q18 14 16 9 Z" fill="#3ea0f0"/><path d="M11 9 L12 12" stroke="#3ea0f0" stroke-width="1"/></g>
<g transform="translate(1686 958) rotate(-45)"><path d="M0 -2.5 L5 -4.5 L5 4.5 L0 2.5 Z" fill="#e8e8e8"/><path d="M5 -4.5 L17 -6.0 L17 6.0 L5 4.5 Z" fill="#f8f8f8"/><path d="M17 -6.0 L62 -6.5 L62 6.5 L17 6.0 Z" fill="#ececec"/></g>
</g>
<defs><clipPath id="bc17"><rect x="1721" y="928" width="58" height="58"/></clipPath></defs>
<rect x="1721" y="928" width="58" height="58" fill="#d3d3d3" />
<g clip-path="url(#bc17)">
<g transform="translate(1721 928)"><path d="M20 40 Q12 48 22 54 Q36 58 58 52" fill="none" stroke="#f8f8f8" stroke-width="8" stroke-linecap="round" filter="url(#blr2)"/></g>
<g transform="translate(1721 928)"><path d="M16 9 Q12 14 12 16 Q12 19 15 19 Q18 19 18 16 Q18 14 16 9 Z" fill="#3ea0f0"/><path d="M11 9 L12 12" stroke="#3ea0f0" stroke-width="1"/></g>
<g transform="translate(1747 958) rotate(-45)"><path d="M0 -4.5 L14 -5.0 L14 5.0 L0 4.5 Z" fill="#f0f0f0"/><path d="M14 -2.0 L54 -2.0 L54 2.0 L14 2.0 Z" fill="#70a0d0"/></g>
</g>
<defs><clipPath id="bc18"><rect x="1781" y="928" width="58" height="58"/></clipPath></defs>
<rect x="1781" y="928" width="58" height="58" fill="#d3d3d3" />
<g clip-path="url(#bc18)">
<g transform="translate(1781 928)"><path d="M16 9 Q12 14 12 16 Q12 19 15 19 Q18 19 18 16 Q18 14 16 9 Z" fill="#3ea0f0"/><path d="M11 9 L12 12" stroke="#3ea0f0" stroke-width="1"/></g>
<rect x="1791" y="962" width="6" height="6" fill="#ffffff" />
<rect x="1797" y="968" width="5" height="5" fill="#ffffff" />
<rect x="1803" y="972" width="6" height="6" fill="#ffffff" />
<rect x="1811" y="970" width="5" height="5" fill="#ffffff" />
<rect x="1817" y="974" width="6" height="6" fill="#ffffff" />
<rect x="1825" y="972" width="5" height="5" fill="#ffffff" />
<rect x="1831" y="966" width="6" height="6" fill="#ffffff" />
<rect x="1793" y="974" width="4" height="4" fill="#ffffff" />
<rect x="1809" y="980" width="6" height="6" fill="#ffffff" />
<rect x="1821" y="980" width="6" height="6" fill="#ffffff" />
<rect x="1831" y="978" width="6" height="6" fill="#ffffff" />
<rect x="1801" y="980" width="5" height="5" fill="#ffffff" />
<g transform="translate(1781 928)"><path d="M28 30 L50 4 L58 4 L58 14 L36 36 Z" fill="#f4f4f4"/><path d="M24 32 L30 26 M34 38 L40 32" stroke="#c0c0c0" stroke-width="4"/></g>
</g>
<defs><clipPath id="bc19"><rect x="1841" y="928" width="58" height="58"/></clipPath></defs>
<rect x="1841" y="928" width="58" height="58" fill="#d3d3d3" />
<g clip-path="url(#bc19)">
<g transform="translate(1841 928)"><path d="M30 36 Q14 34 14 44 Q16 54 34 54 Q50 52 56 42" fill="none" stroke="#fafafa" stroke-width="3" filter="url(#blr)"/></g>
<g transform="translate(1841 928)"><path d="M16 9 Q12 14 12 16 Q12 19 15 19 Q18 19 18 16 Q18 14 16 9 Z" fill="#3ea0f0"/><path d="M11 9 L12 12" stroke="#3ea0f0" stroke-width="1"/></g>
<g transform="translate(1866 959) rotate(-45)"><path d="M0 -3.5 L9 -5.5 L9 5.5 L0 3.5 Z" fill="#222"/><path d="M9 -6.0 L57 -6.5 L57 6.5 L9 6.0 Z" fill="#303030"/></g>
</g>
<path d="M854.4 752.0 L855.2 755.3 L855.3 758.5 L854.8 761.2 L853.8 763.2 L852.4 764.3 L850.9 764.3 L849.4 763.4 L848.1 761.5 L847.1 758.9 L846.6 755.9 L846.6 752.6 L847.2 749.4 L848.4 746.6 L850.1 744.2 L852.3 742.4 L854.9 741.4 L857.7 741.2 L860.7 741.8 L863.7 743.2 L866.7 745.3 L869.3 748.0 L871.7 751.1 L873.5 754.3 L874.7 757.5 L875.3 760.5 L875.3 762.9 L874.7 764.7 L873.6 765.5 L872.1 765.5 L870.5 764.6 L868.9 762.9 L867.6 760.6 L866.8 757.8 L866.5 754.9 L866.8 752.1 L867.7 749.7 L869.2 747.7 L871.1 746.4 L873.4 745.7 L875.7 745.6 L878.1 746.1 L880.3 747.0 L882.3 748.1 L884.0 749.4 L885.4 750.7 L886.5 752.0 L887.4 753.1 L888.2 754.1 L888.8 755.1 L889.3 755.9 L889.7 756.6 L890.0 757.3 L890.1 758.0 L890.1 758.5 L889.9 758.8 L889.7 758.8 L889.4 758.5 L889.1 757.8 L889.1 756.6 L889.3 755.1 L889.9 753.2 L891.0 751.1 L892.6 749.0 L894.7 747.0 L897.1 745.3 L899.9 744.1 L902.8 743.5 L905.6 743.6 L908.2 744.4 L910.4 745.9 L912.0 748.0 L913.2 750.5 L913.7 753.3 L913.6 756.2 L913.1 758.9 L912.2 761.4 L911.0 763.3 L909.7 764.8 L908.4 765.5 L907.3 765.6 L906.4 765.0 L905.8 763.6 L905.7 761.7 L906.1 759.2 L907.1 756.3 L908.6 753.2 L910.7 750.0 L913.3 747.1 L916.3 744.6 L919.5 742.8 L922.8 741.9 L926.1 742.0 L929.0 743.2 L931.4 745.3 L933.2 748.3 L934.3 751.8 L934.7 755.6 L934.4 759.2 L933.5 762.4 L932.2 764.7 L930.7 766.1 L929.3 766.5 L928.1 765.9 L927.3 764.5 L926.9 762.5 L927.1 760.1 L927.7 757.7 L928.9 755.6 L930.3 753.7 L932.0 752.4 L933.8 751.5 L935.6 751.2 L937.4 751.2 L939.1 751.5 L940.7 752.0 L942.2 752.8 L943.7 753.7 L945.1 754.7 L946.3 755.9 L947.5 757.2 M860.4 778.0 L861.2 781.4 L861.3 784.7 L860.8 787.5 L859.8 789.5 L858.4 790.5 L856.9 790.3 L855.4 789.2 L854.1 787.2 L853.2 784.6 L852.7 781.6 L852.8 778.4 L853.3 775.3 L854.4 772.5 L856.1 770.2 L858.2 768.5 L860.7 767.5 L863.5 767.3 L866.6 767.9 L869.8 769.4 L872.9 771.7 L875.7 774.6 L878.0 777.8 L879.7 781.2 L880.8 784.3 L881.1 787.0 L880.8 789.0 L880.0 790.2 L878.8 790.6 L877.5 790.1 L876.4 788.9 L875.5 787.3 L875.1 785.5 L875.1 783.6 L875.6 781.9 L876.4 780.4 L877.5 779.3 L878.8 778.4 L880.2 777.8 L881.6 777.4 L883.1 777.0 L884.6 776.7 L886.1 776.4 L887.8 776.3 L889.6 776.3 L891.5 776.6 L893.4 777.3 L895.2 778.4 L896.7 779.9 L897.8 781.9 L898.4 784.1 L898.5 786.4 L898.0 788.6 L897.1 790.5 L895.9 791.8 L894.6 792.5 L893.3 792.5 L892.4 791.8 L891.9 790.3 L891.9 788.3 L892.5 785.9 L893.7 783.2 L895.3 780.4 L897.4 777.8 L899.9 775.4 L902.7 773.3 L905.6 771.8 L908.6 770.9 L911.6 770.7 L914.3 771.3 L916.8 772.8 L918.7 775.1 L920.1 778.1 L920.7 781.7 L920.7 785.5 L920.0 789.1 L918.7 792.2 L917.1 794.5 L915.4 795.7 L913.7 795.7 L912.5 794.5 L911.7 792.4 L911.6 789.7 L912.2 786.7 L913.4 783.8 L915.1 781.4 L917.0 779.6 L919.2 778.6 L921.3 778.2 L923.3 778.3 L925.1 778.8 L926.8 779.6 L928.3 780.5 L929.7 781.5 L931.0 782.6 L932.3 783.8 L933.5 785.2" fill="none" stroke="#c6c6c6" stroke-width="0.9"/>
<defs><linearGradient id="fd0" gradientUnits="userSpaceOnUse" x1="422.2" y1="959.8" x2="593.9" y2="792.1"><stop offset="0" stop-color="#ffffff"/><stop offset=".45" stop-color="#8a8a8a" stop-opacity=".9"/><stop offset="1" stop-color="#8a8a8a"/></linearGradient></defs>
<path d="M422.2 959.8 L593.9 792.1" fill="none" stroke="url(#fd0)" stroke-width="1.4" stroke-linecap="round"/>
<defs><linearGradient id="fd1" gradientUnits="userSpaceOnUse" x1="466.7" y1="976.0" x2="604.0" y2="791.1"><stop offset="0" stop-color="#ffffff"/><stop offset=".45" stop-color="#858585" stop-opacity=".9"/><stop offset="1" stop-color="#858585"/></linearGradient></defs>
<path d="M466.7 976.0 C485.2 951.0 554.9 857.3 577.8 826.5 C600.7 795.7 599.7 797.0 604.0 791.1" fill="none" stroke="url(#fd1)" stroke-width="1.5" stroke-linecap="round"/>
<defs><linearGradient id="fd2" gradientUnits="userSpaceOnUse" x1="926.4" y1="970.9" x2="793.0" y2="746.7"><stop offset="0" stop-color="#ffffff"/><stop offset=".45" stop-color="#888888" stop-opacity=".9"/><stop offset="1" stop-color="#888888"/></linearGradient></defs>
<path d="M926.4 970.9 C922.3 966.4 911.2 955.8 902.1 943.6 C893.0 931.5 882.9 915.9 871.8 898.2 C860.7 880.5 845.6 856.3 835.5 837.6 C825.4 818.9 818.3 801.2 811.2 786.1 C804.1 770.9 796.1 753.2 793.0 746.7" fill="none" stroke="url(#fd2)" stroke-width="1.4" stroke-linecap="round"/>
<path d="M563.3 323.3 C563.9 327.2 567.8 336.1 566.7 346.7 C565.6 357.2 558.3 380.0 556.7 386.7 M616.7 413.3 L590.0 436.7 M496.7 446.7 C501.1 442.2 513.3 427.8 523.3 420.0 C533.3 412.2 551.1 403.3 556.7 400.0 M481.7 323.3 L456.7 356.7 M793.3 300.0 C795.6 303.3 806.1 311.1 806.7 320.0 C807.2 328.9 799.4 344.4 796.7 353.3 C793.9 362.2 796.1 361.1 790.0 373.3 C783.9 385.6 765.0 417.8 760.0 426.7 M726.7 410.0 C727.2 415.0 727.8 438.9 730.0 440.0 C732.2 441.1 737.2 417.8 740.0 416.7 C742.8 415.6 744.4 435.0 746.7 433.3 C748.9 431.7 752.2 411.1 753.3 406.7 M776.7 186.7 C778.3 191.1 783.3 203.3 786.7 213.3 C790.0 223.3 795.0 241.1 796.7 246.7 M820.0 276.7 C816.7 286.1 805.6 316.1 800.0 333.3 C794.4 350.6 792.2 365.0 786.7 380.0 C781.1 395.0 770.0 416.1 766.7 423.3 M665.1 161.4 C671.1 160.9 688.6 157.5 701.4 158.4 C714.2 159.2 730.0 162.8 741.8 166.5 C753.6 170.2 767.1 178.2 772.1 180.6 M590.3 241.2 C591.3 237.2 592.7 226.1 596.4 217.0 C600.1 207.9 605.1 193.7 612.5 186.7 C619.9 179.6 629.4 176.7 640.8 174.5 C652.3 172.4 674.5 173.7 681.2 173.5 M624.6 257.4 C626.0 251.3 628.4 231.1 632.7 221.0 C637.1 210.9 642.8 201.5 650.9 196.8 C659.0 192.1 668.8 190.0 681.2 192.7 C693.7 195.4 718.2 209.6 725.7 212.9 M636.8 264.4 L650.9 279.6 M774.1 190.7 C776.2 194.1 782.6 201.8 786.3 210.9 C790.0 220.0 794.7 239.5 796.4 245.3 M310.0 581.7 C313.3 588.1 322.2 606.9 330.0 620.0 C337.8 633.1 347.8 649.4 356.7 660.0 C365.6 670.6 378.9 679.4 383.3 683.3 M520.0 453.3 C517.8 458.9 509.4 473.3 506.7 486.7 C503.9 500.0 501.7 518.9 503.3 533.3 C505.0 547.8 513.9 562.2 516.7 573.3 C519.4 584.4 519.4 595.6 520.0 600.0 M555.1 399.4 C549.7 403.2 532.5 413.9 522.8 422.0 C513.1 430.1 501.8 439.8 496.9 447.9 C492.1 456.0 498.0 461.4 493.7 470.5 C489.4 479.7 477.5 491.5 471.1 502.9 C464.6 514.2 457.6 528.7 454.9 538.4 C452.2 548.1 454.3 552.4 454.9 561.1 C455.4 569.7 456.2 581.5 458.1 590.2 C460.0 598.8 464.0 603.6 466.2 612.8 C468.4 621.9 468.1 637.0 471.1 645.1 C474.0 653.2 480.8 659.4 484.0 661.3 C487.2 663.2 489.4 657.2 490.5 656.4 M548.6 380.0 C544.3 390.8 531.4 427.4 522.8 444.7 C514.2 461.9 507.7 468.4 496.9 483.5 C486.1 498.5 464.6 526.6 458.1 535.2 M386.7 693.3 C392.8 691.1 408.3 683.1 423.3 680.0 C438.3 676.9 463.1 675.0 476.7 675.0 C490.3 675.0 501.1 678.1 505.0 680.0 C508.9 681.9 504.7 685.3 500.0 686.7 C495.3 688.1 489.4 688.6 476.7 688.3 C463.9 688.1 432.2 685.6 423.3 685.0 M646.7 683.3 L690.0 680.0 M606.7 710.0 L633.3 695.0 M646.7 526.7 C650.6 518.9 663.3 494.4 670.0 480.0 C676.7 465.6 683.9 446.7 686.7 440.0 M770.0 516.7 C773.9 518.9 785.6 523.9 793.3 530.0 C801.1 536.1 810.6 546.1 816.7 553.3 C822.8 560.6 824.4 565.6 830.0 573.3 C835.6 581.1 846.7 595.6 850.0 600.0 M813.3 713.3 L860.0 716.7 M683.3 453.3 L646.7 520.0 M580.0 680.0 L598.2 722.4 M610.3 710.3 L631.5 695.2 M815.8 755.8 L947.6 754.2 M862.7 840.6 C863.2 836.6 863.7 818.4 865.8 816.4 C867.8 814.3 872.3 829.0 874.8 828.5 C877.4 828.0 878.9 812.8 880.9 813.3 C882.9 813.8 885.5 827.5 887.0 831.5 C888.5 835.6 889.5 836.6 890.0 837.6 M908.2 825.5 C910.7 824.4 920.3 818.4 923.3 819.4 C926.4 820.4 928.9 827.0 926.4 831.5 C923.8 836.1 908.2 843.1 908.2 846.7 C908.2 850.2 923.3 851.7 926.4 852.7 M862.7 716.4 L862.7 740.6" fill="none" stroke="#d0d0d0" stroke-width="1.0" stroke-linecap="round" stroke-linejoin="round"/>
<path d="M500.0 223.3 C505.0 217.8 519.4 201.1 530.0 190.0 C540.6 178.9 553.3 165.8 563.3 156.7 C573.3 147.5 582.2 138.6 590.0 135.0 C597.8 131.4 603.3 133.1 610.0 135.0 C616.7 136.9 626.7 144.7 630.0 146.7 M530.0 188.3 C526.1 196.4 513.3 221.9 506.7 236.7 C500.0 251.4 496.1 260.6 490.0 276.7 C483.9 292.8 475.6 319.4 470.0 333.3 C464.4 347.2 458.9 355.6 456.7 360.0 M481.7 323.3 C478.6 328.1 469.4 342.2 463.3 351.7 C457.3 361.1 448.3 375.3 445.3 380.0 M583.3 246.7 C583.1 251.1 580.6 264.4 581.7 273.3 C582.8 282.2 585.3 289.4 590.0 300.0 C594.7 310.6 605.0 328.9 610.0 336.7 C615.0 344.4 618.3 345.0 620.0 346.7 M593.3 206.7 C590.0 220.0 578.3 266.7 573.3 286.7 C568.3 306.7 566.1 312.2 563.3 326.7 C560.6 341.1 560.0 357.8 556.7 373.3 C553.3 388.9 547.2 407.2 543.3 420.0 C539.4 432.8 535.0 445.0 533.3 450.0 M630.0 346.7 C625.6 353.3 613.9 371.1 603.3 386.7 C592.8 402.2 572.8 431.1 566.7 440.0 M803.3 226.7 C805.6 232.2 812.2 248.9 816.7 260.0 C821.1 271.1 826.9 281.1 830.0 293.3 C833.1 305.6 835.0 321.7 835.0 333.3 C835.0 345.0 833.6 354.4 830.0 363.3 C826.4 372.2 816.1 382.8 813.3 386.7 M625.0 313.3 C634.7 312.5 663.6 307.8 683.3 308.3 C703.1 308.9 725.0 311.9 743.3 316.7 C761.7 321.4 785.0 333.3 793.3 336.7 M584.2 144.2 C584.1 145.1 580.5 147.1 583.2 149.3 C585.9 151.5 594.2 154.5 600.4 157.4 C606.6 160.2 617.2 164.9 620.6 166.5 M595.4 168.5 L630.7 152.3 M590.3 173.5 C591.3 174.7 593.7 178.8 596.4 180.6 C599.1 182.5 604.8 184.0 606.5 184.6 M630.7 152.3 C632.7 151.1 639.8 146.3 642.8 145.3 C645.9 144.2 646.4 142.9 648.9 146.3 C651.4 149.6 656.5 162.3 658.0 165.5 M657.0 158.4 C661.0 158.2 673.8 156.7 681.2 157.4 C688.6 158.0 693.0 158.9 701.4 162.4 C709.8 166.0 721.6 172.2 731.7 178.6 C741.8 185.0 753.6 194.7 762.0 200.8 C770.4 206.9 775.5 210.9 782.2 214.9 C789.0 219.0 795.7 220.7 802.4 225.1 C809.2 229.4 819.3 238.5 822.6 241.2 M606.5 261.4 C608.1 254.7 610.8 232.1 616.6 221.0 C622.3 209.9 632.7 199.6 640.8 194.7 C648.9 189.9 654.9 191.9 665.1 191.7 C675.2 191.5 690.3 192.2 701.4 193.7 C712.5 195.3 721.6 197.9 731.7 200.8 C741.8 203.7 754.3 208.2 762.0 210.9 C769.8 213.6 775.5 216.0 778.2 217.0 M620.6 279.6 C621.6 277.6 624.0 270.2 626.7 267.5 C629.4 264.8 633.1 263.8 636.8 263.4 C640.5 263.1 645.9 263.8 648.9 265.5 C651.9 267.1 652.9 269.5 654.9 273.5 C657.0 277.6 660.0 287.0 661.0 289.7 M621.6 273.5 C621.4 276.6 620.1 284.0 620.6 291.7 C621.1 299.5 624.0 315.3 624.6 320.0 M582.2 251.3 C582.9 250.3 584.4 246.4 586.3 245.3 C588.1 244.1 592.2 244.4 593.3 244.2 M582.2 251.3 C582.4 255.4 581.2 267.1 583.2 275.6 C585.3 284.0 590.8 294.4 594.3 301.8 C597.9 309.2 602.8 317.0 604.4 320.0 M445.2 380.0 C440.9 387.0 429.0 406.9 419.3 422.0 C409.6 437.1 396.7 456.5 387.0 470.5 C377.3 484.5 367.3 495.3 361.1 506.1 C354.9 516.9 352.0 527.1 349.8 535.2 C347.7 543.3 349.1 548.1 348.2 554.6 C347.3 561.1 343.2 564.3 344.3 574.0 C345.4 583.7 349.7 597.7 354.7 612.8 C359.6 627.9 369.2 652.9 374.1 664.5 C378.9 676.1 382.1 679.3 383.8 682.3 M523.3 563.3 C527.8 572.8 541.1 600.6 550.0 620.0 C558.9 639.4 568.9 663.3 576.7 680.0 C584.4 696.7 593.3 713.3 596.7 720.0 M603.3 526.7 C606.1 536.7 615.0 568.3 620.0 586.7 C625.0 605.0 628.9 621.7 633.3 636.7 C637.8 651.7 644.4 670.0 646.7 676.7 M503.3 746.7 C504.4 743.3 507.2 730.6 510.0 726.7 C512.8 722.8 507.8 721.1 520.0 723.3 C532.2 725.6 568.9 735.8 583.3 740.0 C597.8 744.2 602.8 746.9 606.7 748.3 M646.7 640.0 L673.3 660.0 M713.3 450.0 C719.4 450.3 738.9 450.0 750.0 451.7 C761.1 453.3 771.7 456.9 780.0 460.0 C788.3 463.1 796.1 467.8 800.0 470.0 C803.9 472.2 802.8 472.8 803.3 473.3 M793.3 480.0 L820.0 500.0 M800.0 486.7 L846.7 546.7 M796.7 523.3 L800.0 553.3 M813.3 553.3 C815.6 557.8 824.4 571.1 826.7 580.0 C828.9 588.9 828.9 597.8 826.7 606.7 C824.4 615.6 817.8 623.3 813.3 633.3 C808.9 643.3 802.2 661.1 800.0 666.7 M715.0 521.7 C716.9 525.3 722.8 536.7 726.7 543.3 C730.6 550.0 736.4 558.6 738.3 561.7 M603.3 526.7 C604.4 531.1 606.1 540.0 610.0 553.3 C613.9 566.7 620.6 586.1 626.7 606.7 C632.8 627.2 643.3 665.0 646.7 676.7 M646.7 636.7 C647.8 638.9 648.9 646.1 653.3 650.0 C657.8 653.9 670.0 658.3 673.3 660.0 M645.0 683.3 C654.2 682.8 682.5 682.2 700.0 680.0 C717.5 677.8 733.3 673.3 750.0 670.0 C766.7 666.7 788.3 661.7 800.0 660.0 C811.7 658.3 811.1 661.1 820.0 660.0 C828.9 658.9 840.0 657.2 853.3 653.3 C866.7 649.4 888.9 640.0 900.0 636.7 C911.1 633.3 912.2 633.9 920.0 633.3 C927.8 632.8 940.3 630.6 946.7 633.3 C953.1 636.1 957.8 643.9 958.3 650.0 C958.9 656.1 956.9 662.2 950.0 670.0 C943.1 677.8 927.8 689.4 916.7 696.7 C905.6 703.9 892.8 709.4 883.3 713.3 C873.9 717.2 863.9 718.9 860.0 720.0 M860.0 650.0 C865.0 656.1 882.2 676.1 890.0 686.7 C897.8 697.2 902.8 704.4 906.7 713.3 C910.6 722.2 912.2 735.6 913.3 740.0 M876.7 650.0 C880.6 656.1 894.2 673.3 900.0 686.7 C905.8 700.0 909.7 722.8 911.7 730.0 M790.0 716.7 L785.0 750.0 M505.8 730.0 C505.4 734.8 503.4 751.5 503.6 758.8 C503.9 766.1 503.9 765.1 507.3 773.9 C510.7 782.8 521.2 805.5 523.9 811.8 M589.1 722.4 C589.6 724.4 587.1 729.5 592.1 734.5 C597.2 739.6 613.3 746.7 619.4 752.7 C625.5 758.8 624.9 767.1 628.5 770.9 C632.0 774.7 635.6 776.0 640.6 775.5 C645.7 774.9 655.8 769.1 658.8 767.9 M563.3 680.0 C565.1 686.1 569.6 702.7 573.9 716.4 C578.2 730.0 586.6 754.2 589.1 761.8 M564.8 680.0 C569.4 686.6 585.1 708.8 592.1 719.4 C599.2 730.0 604.7 739.6 607.3 743.6 M549.5 816.4 L591.9 792.1 M791.5 716.4 C790.3 721.9 785.5 738.6 783.9 749.7 C782.4 760.8 782.7 777.5 782.4 783.0 M832.4 761.8 C831.9 769.4 827.4 792.1 829.4 807.3 C831.4 822.4 837.5 841.1 844.5 852.7 C851.6 864.3 861.2 872.2 871.8 877.0 C882.4 881.8 894.0 883.5 908.2 881.5 C922.3 879.5 945.6 873.2 956.7 864.8 C967.8 856.5 971.6 843.1 974.8 831.5 C978.1 819.9 978.4 806.3 976.4 795.2 C974.3 784.0 967.0 771.2 962.7 764.8 C958.4 758.5 952.6 758.5 950.6 757.3 M835.5 758.8 C837.5 758.3 836.5 756.5 847.6 755.8 C858.7 755.0 885.5 753.7 902.1 754.2 C918.8 754.7 939.2 755.5 947.6 758.8 C955.9 762.1 954.6 767.9 952.1 773.9 C949.6 780.0 943.3 790.1 932.4 795.2 C921.6 800.2 900.1 804.2 887.0 804.2 C873.8 804.2 862.2 799.7 853.6 795.2 C845.1 790.6 838.5 783.0 835.5 777.0 C832.4 770.9 835.5 761.8 835.5 758.8" fill="none" stroke="#acacac" stroke-width="1.1" stroke-linecap="round" stroke-linejoin="round"/>
<path d="M781.7 181.7 C780.8 188.1 779.2 206.9 776.7 220.0 C774.2 233.1 771.7 244.4 766.7 260.0 C761.7 275.6 754.4 295.0 746.7 313.3 C738.9 331.7 730.6 347.2 720.0 370.0 C709.4 392.8 689.4 436.7 683.3 450.0 M503.3 520.0 C503.9 525.6 502.8 543.3 506.7 553.3 C510.6 563.3 520.6 567.8 526.7 580.0 C532.8 592.2 537.2 610.0 543.3 626.7 C549.4 643.3 557.2 659.4 563.3 680.0 C569.4 700.6 577.2 738.3 580.0 750.0 M550.0 643.3 C551.7 647.2 555.6 655.6 560.0 666.7 C564.4 677.8 573.9 702.8 576.7 710.0 M596.7 563.3 C606.7 559.2 641.1 542.5 656.7 538.3 C672.2 534.2 684.4 538.3 690.0 538.3 M800.0 470.0 C800.8 475.6 803.1 491.7 805.0 503.3 C806.9 515.0 810.6 533.9 811.7 540.0 M821.7 491.7 C823.6 496.4 829.7 509.7 833.3 520.0 C836.9 530.3 840.6 540.0 843.3 553.3 C846.1 566.7 848.3 583.3 850.0 600.0 C851.7 616.7 852.8 644.4 853.3 653.3 M600.0 560.0 C608.9 556.4 630.6 541.7 653.3 538.3 C676.1 535.0 722.8 539.7 736.7 540.0 M683.3 750.0 C694.4 746.7 728.3 736.1 750.0 730.0 C771.7 723.9 802.8 716.1 813.3 713.3 M501.2 728.5 C503.7 728.0 504.2 723.2 516.4 725.5 C528.5 727.7 559.3 738.8 573.9 742.1 C588.6 745.4 595.2 742.9 604.2 745.2 C613.3 747.4 620.4 753.7 628.5 755.8 C636.6 757.8 637.6 759.8 652.7 757.3 C667.9 754.7 708.3 743.4 719.4 740.6 M564.8 752.7 C569.4 752.0 582.5 748.2 592.1 748.2 C601.7 748.2 612.3 749.2 622.4 752.7 C632.5 756.3 636.6 766.9 652.7 769.4 C668.9 771.9 708.3 768.1 719.4 767.9 M605.8 749.7 C603.5 756.8 596.9 779.5 592.1 792.1 C587.3 804.7 579.5 819.9 577.0 825.5 M523.2 811.3 C526.9 810.1 536.4 806.3 545.5 804.2 C554.5 802.2 570.0 800.2 577.8 799.2 C585.5 798.2 589.6 798.4 591.9 798.2 M592.1 792.1 C595.2 791.6 602.7 788.6 610.3 789.1 C617.9 789.6 627.5 792.1 637.6 795.2 C647.7 798.2 660.8 804.7 670.9 807.3 C681.0 809.8 690.1 809.5 698.2 810.3 C706.3 811.1 715.9 811.6 719.4 811.8 M690.0 769.4 C697.6 768.9 720.3 768.6 735.5 766.4 C750.6 764.1 771.1 759.0 780.9 755.8 C790.8 752.5 792.3 748.2 794.5 746.7 M690.0 808.8 C692.5 809.5 692.5 814.1 705.2 813.3 C717.8 812.6 747.1 809.8 765.8 804.2 C784.4 798.7 808.7 784.0 817.3 780.0" fill="none" stroke="#909090" stroke-width="1.35" stroke-linecap="round" stroke-linejoin="round"/>
<path d="M786.0 248.3 C786.8 250.3 790.0 253.6 790.7 260.0 C791.3 266.4 790.9 278.6 790.0 286.7 C789.1 294.7 785.8 304.7 785.0 308.3 M646.7 356.7 C650.0 361.1 659.4 375.6 666.7 383.3 C673.9 391.1 683.9 398.9 690.0 403.3 C696.1 407.8 699.4 409.2 703.3 410.0 C707.2 410.8 707.2 412.2 713.3 408.3 C719.4 404.4 732.8 393.6 740.0 386.7 C747.2 379.7 752.9 372.2 756.7 366.7 C760.4 361.1 761.5 357.2 762.3 353.3 C763.2 349.4 761.8 345.0 761.7 343.3 M688.3 403.3 C687.5 406.1 684.3 414.7 683.3 420.0 C682.4 425.3 682.8 432.5 682.7 435.0 M630.6 339.4 C629.8 342.2 628.1 348.3 625.7 356.4 C623.3 364.4 619.7 377.4 616.0 387.9 C612.4 398.4 608.0 412.1 603.9 419.4 C599.9 426.6 597.4 427.2 591.8 431.5 C586.1 435.7 577.3 442.2 570.0 444.8 C562.7 447.4 555.4 445.6 548.2 447.2 C540.9 448.9 532.4 450.7 526.4 454.5 C520.3 458.4 515.4 463.6 511.8 470.3 C508.2 476.9 506.0 487.2 504.5 494.5 C503.1 501.8 503.1 507.0 503.3 513.9 C503.5 520.8 505.3 532.1 505.8 535.7 M683.3 433.3 C686.1 435.3 695.0 441.9 700.0 445.0 C705.0 448.1 709.2 450.3 713.3 451.7 C717.5 453.1 723.1 453.1 725.0 453.3 M683.3 420.0 L682.7 456.7 M586.7 453.3 C588.9 453.9 592.2 454.4 600.0 456.7 C607.8 458.9 623.3 464.4 633.3 466.7 C643.3 468.9 652.8 468.1 660.0 470.0 C667.2 471.9 672.8 476.4 676.7 478.3 C680.6 480.3 682.2 481.1 683.3 481.7 M696.7 476.7 C697.2 475.6 697.5 471.7 700.0 470.0 C702.5 468.3 709.7 467.2 711.7 466.7 M770.0 508.3 L781.7 515.0" fill="none" stroke="#262626" stroke-width="1.45" stroke-linecap="round" stroke-linejoin="round"/>
</svg>
</body></html>
